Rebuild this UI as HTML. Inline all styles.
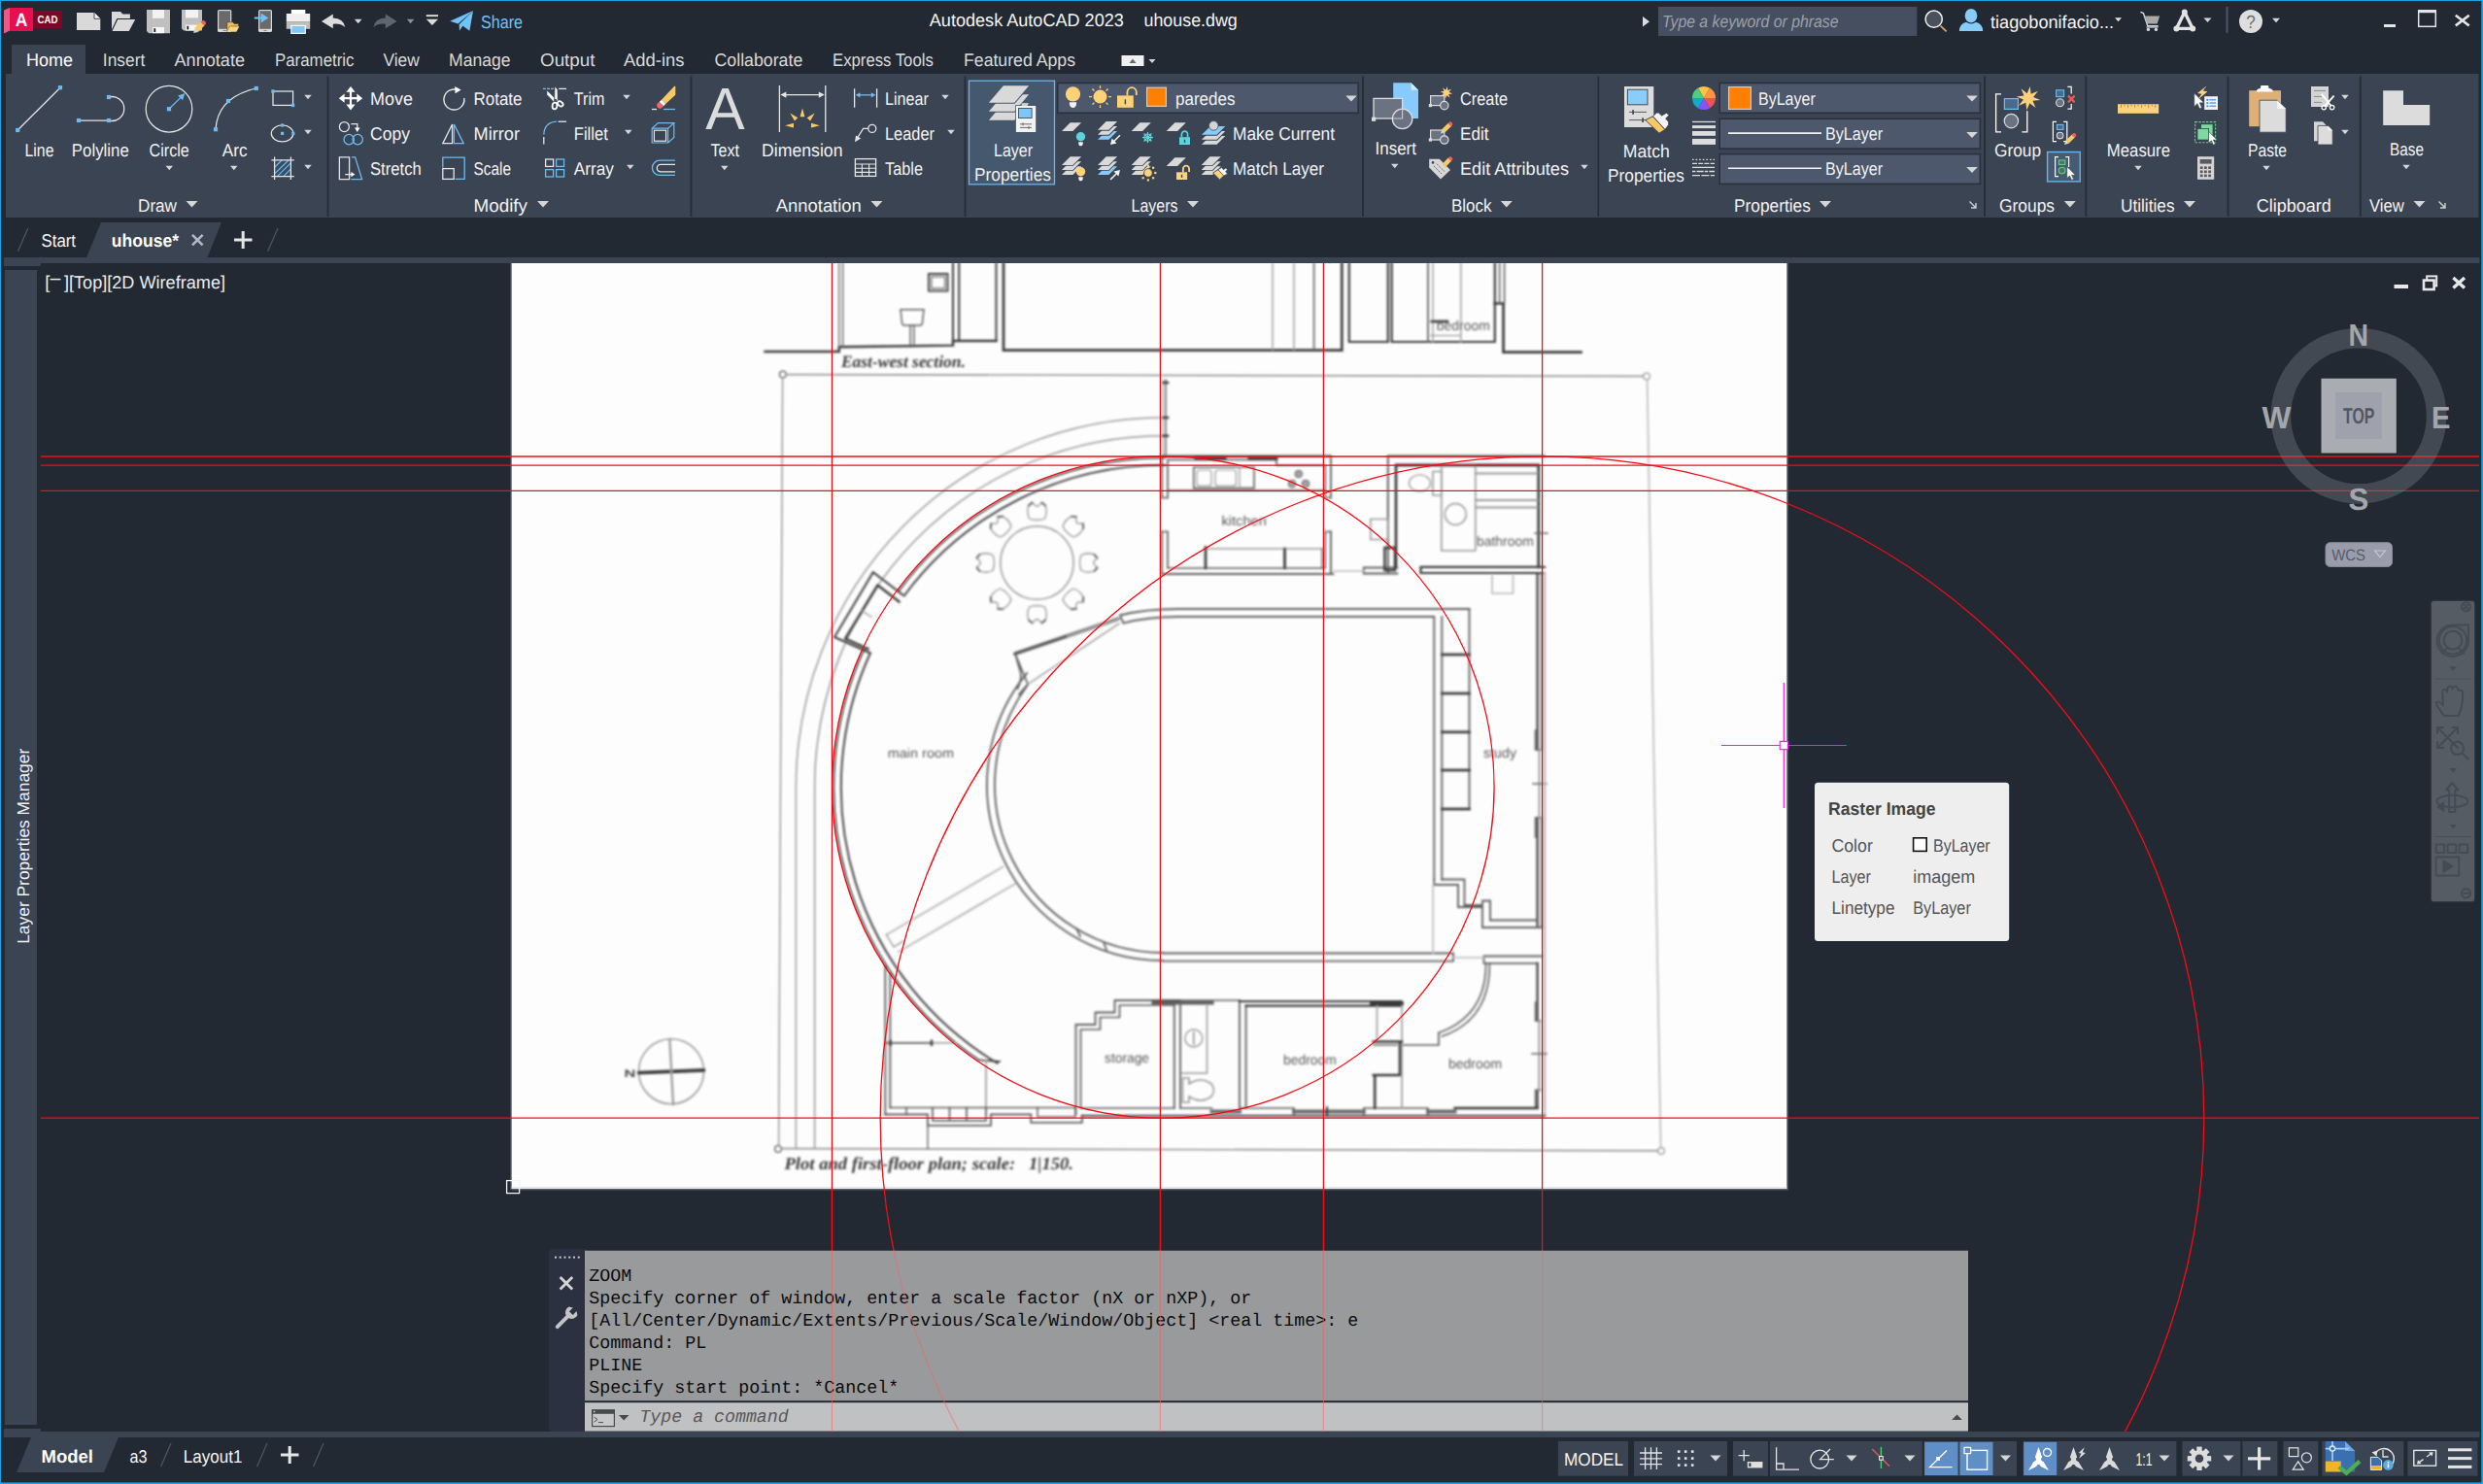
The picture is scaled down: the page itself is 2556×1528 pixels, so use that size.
<!DOCTYPE html>
<html lang="en"><head><meta charset="utf-8"><title>Autodesk AutoCAD 2023 - uhouse.dwg</title>
<style>html,body{margin:0;padding:0;background:#222933;overflow:hidden}svg{display:block}</style></head>
<body>
<svg width="2556" height="1528" viewBox="0 0 2556 1528" font-family="Liberation Sans, sans-serif" text-rendering="geometricPrecision">
<rect x="0" y="0" width="2556" height="1528" fill="#222933"/>
<defs><clipPath id="vp"><rect x="42" y="271" width="2510" height="1203"/></clipPath><clipPath id="img"><rect x="526.5" y="271" width="1313" height="953"/></clipPath><clipPath id="cmdc"><rect x="602" y="1287.7" width="1424" height="186"/></clipPath><filter id="soft" x="-2%" y="-2%" width="104%" height="104%"><feGaussianBlur stdDeviation="0.85"/></filter></defs>
<g clip-path="url(#vp)">
<rect x="526.5" y="271" width="1313" height="953" fill="#fdfdfd"/>
<rect x="526.5" y="1222.2" width="1313" height="1.4" fill="#e0e2e4"/>
<rect x="526.5" y="1224" width="1313.6" height="1.5" fill="#6c727b" opacity="0.75"/>
<rect x="1839.5" y="271" width="1.4" height="954.4" fill="#6c727b" opacity="0.6"/>
<rect x="525.2" y="271" width="1.3" height="954" fill="#6c727b" opacity="0.6"/>
<g clip-path="url(#img)">
<g filter="url(#soft)" stroke-linecap="square">
<path d="M787.5 362 H863.8 V357.2 L981 355.6 V351 H1025.5" fill="none" stroke="#3a3a3a" stroke-width="2.44"/>
<path d="M863.8 271 V357 M867.6 271 V357" fill="none" stroke="#5e5e5e" stroke-width="1.342"/>
<path d="M981 271 V352 M987.2 271 V351" fill="none" stroke="#3a3a3a" stroke-width="1.952"/>
<path d="M1025.5 271 V351" fill="none" stroke="#3a3a3a" stroke-width="1.952"/>
<path d="M1033 271 V360.6 H1381.3 V271" fill="none" stroke="#3a3a3a" stroke-width="2.684"/>
<path d="M1310 271 V360 M1332 271 V360" fill="none" stroke="#989898" stroke-width="1.342"/>
<path d="M1352.6 271 V360" fill="none" stroke="#5e5e5e" stroke-width="1.586"/>
<path d="M956 282 H975.5 V299.6 H956 Z" fill="none" stroke="#3a3a3a" stroke-width="1.83"/>
<path d="M958.8 284.8 H972.7 V296.8 H958.8 Z" fill="none" stroke="#5e5e5e" stroke-width="1.22"/>
<path d="M927 318.8 H951 L949.4 333 Q949 335 947 335 H931 Q929 335 928.6 333 Z" fill="none" stroke="#5e5e5e" stroke-width="1.464"/>
<path d="M937.2 335 V357 M940.8 335 V357" fill="none" stroke="#5e5e5e" stroke-width="1.464"/>
<path d="M1388.8 271 V352 H1428.8 V271" fill="none" stroke="#3a3a3a" stroke-width="2.196"/>
<path d="M1432.6 271 V352 H1538.8 V271" fill="none" stroke="#3a3a3a" stroke-width="2.196"/>
<path d="M1470 271 V352" fill="none" stroke="#5e5e5e" stroke-width="1.708"/>
<path d="M1475 271 V352 M1503.8 271 V352" fill="none" stroke="#989898" stroke-width="1.342"/>
<path d="M1473.8 331 H1490" fill="none" stroke="#3a3a3a" stroke-width="2.684"/>
<path d="M1473 345.5 H1503" fill="none" stroke="#989898" stroke-width="1.22"/>
<path d="M1538.8 312.5 H1547.6 V362.6 H1627.5" fill="none" stroke="#3a3a3a" stroke-width="2.684"/>
<path d="M1543.6 271 V312 M1548.6 271 V312" fill="none" stroke="#5e5e5e" stroke-width="1.586"/>
<text x="1478.8" y="340" font-size="14" fill="#585858" textLength="55" lengthAdjust="spacingAndGlyphs">bedroom</text>
<text x="866" y="377.5" font-size="17.5" fill="#3a3a3a" textLength="127.8" lengthAdjust="spacingAndGlyphs" font-weight="bold" font-style="italic" font-family="Liberation Serif, DejaVu Serif, serif">East-west section.</text>
<circle cx="805.8" cy="385.5" r="3.4" fill="none" stroke="#5e5e5e" stroke-width="1.3"/>
<circle cx="1695" cy="387.5" r="3.4" fill="none" stroke="#989898" stroke-width="1.2"/>
<circle cx="801" cy="1183" r="3.4" fill="none" stroke="#5e5e5e" stroke-width="1.3"/>
<circle cx="1710" cy="1185" r="3.4" fill="none" stroke="#989898" stroke-width="1.2"/>
<path d="M809.2 385.6 L1691.6 387.4" fill="none" stroke="#989898" stroke-width="1.708"/>
<path d="M805.6 389 L801.6 1179.6" fill="none" stroke="#989898" stroke-width="1.464"/>
<path d="M804.4 1182.6 L1706.6 1184.8" fill="none" stroke="#989898" stroke-width="1.708"/>
<path d="M1695.6 391 L1709.6 1181.6" fill="none" stroke="#b8b8b8" stroke-width="1.586"/>
<path d="M1196 430 A378 380.5 0 0 0 819.4 810.5 V1182.5" fill="none" stroke="#989898" stroke-width="1.464"/>
<path d="M1196 448.8 A358.8 361.8 0 0 0 838.6 810.5 V1182.5" fill="none" stroke="#989898" stroke-width="1.464"/>
<path d="M1200 391 V469" fill="none" stroke="#5e5e5e" stroke-width="1.464"/>
<path d="M1197 391 V469" fill="none" stroke="#989898" stroke-width="1.22"/>
<path d="M1197.5 394 H1202" fill="none" stroke="#3a3a3a" stroke-width="2.44"/>
<path d="M1197.5 430 H1202" fill="none" stroke="#3a3a3a" stroke-width="2.44"/>
<path d="M1197.5 448.8 H1202" fill="none" stroke="#3a3a3a" stroke-width="2.44"/>
<path d="M955 1159 V1182.5" fill="none" stroke="#5e5e5e" stroke-width="1.342"/>
<path d="M1199.2 471.3 A339.2 339.2 0 0 0 924.6 609.0" fill="none" stroke="#3a3a3a" stroke-width="1.83"/>
<path d="M1199.1 478.9 A331.6 331.6 0 0 0 930.7 613.5" fill="none" stroke="#3a3a3a" stroke-width="1.83"/>
<path d="M924.6 609.0 L930 613 L898.8 589.2 L859 656 L896 672.5 L889.0 669.3" fill="none" stroke="#3a3a3a" stroke-width="1.952"/>
<path d="M925.5 619.5 L903.5 602.5 L870.2 657.5 L893.5 668.2" fill="none" stroke="#3a3a3a" stroke-width="2.44"/>
<path d="M887.5 629 L897.5 635.5" fill="none" stroke="#989898" stroke-width="1.22"/>
<path d="M889.0 669.3 A339.2 339.2 0 0 0 1007.4 1091.5" fill="none" stroke="#3a3a3a" stroke-width="1.83"/>
<path d="M895.9 672.5 A331.6 331.6 0 0 0 1026.3 1094.5" fill="none" stroke="#3a3a3a" stroke-width="1.83"/>
<path d="M1007.4 1091.5 L1028.5 1093 L1026.28 1094.53" fill="none" stroke="#3a3a3a" stroke-width="1.708"/>
<path d="M1512.5 627 H1212 Q1180 627 1153 633.5 L1156.4 641.6 Q1182 635 1212 635 H1476" fill="none" stroke="#5e5e5e" stroke-width="1.83"/>
<path d="M1476.3 635 V905.5 M1484.3 635 V905.5" fill="none" stroke="#5e5e5e" stroke-width="1.83"/>
<path d="M1197 981.5 H1496 V989.6 H1197" fill="none" stroke="#5e5e5e" stroke-width="1.83"/>
<path d="M1197.0 989.0 A181 181 0 0 1 1057.1 693.1" fill="none" stroke="#5e5e5e" stroke-width="1.83"/>
<path d="M1197.0 981.0 A173 173 0 0 1 1057.8 705.3" fill="none" stroke="#5e5e5e" stroke-width="1.83"/>
<path d="M1045 673 L1150 637.5" fill="none" stroke="#3a3a3a" stroke-width="3.904" stroke-opacity="0.8" stroke-linecap="round"/>
<path d="M1100 655 L1152 637" fill="none" stroke="#989898" stroke-width="2.684"/>
<path d="M1045 673 L1050.5 692 Q1052 700 1047.5 709 M1045 673 L1058 704.5 L1049 715" fill="none" stroke="#5e5e5e" stroke-width="1.708"/>
<path d="M1058 704.5 L1152 642" fill="none" stroke="#989898" stroke-width="1.464"/>
<path d="M1032.5 892.5 L912.5 962.5 M1045 910 L925 980" fill="none" stroke="#b8b8b8" stroke-width="1.952"/>
<path d="M912.5 962.5 L920 975 L930 969" fill="none" stroke="#989898" stroke-width="1.342"/>
<path d="M1108 956 L1112 964 M1136 970 L1139 978" fill="none" stroke="#5e5e5e" stroke-width="1.708"/>
<circle cx="1067.5" cy="579.5" r="37.7" fill="none" stroke="#989898" stroke-width="1.5"/>
<g transform="translate(1067.5 528.0) rotate(-90)" fill="none" stroke="#989898" stroke-width="1.3"><path d="M-6 -8 Q-9 0 -6 8 Q2 11.5 8.5 8 Q11 4 8 2.5 Q5.5 0 8 -2.5 Q11 -4 8.5 -8 Q2 -11.5 -6 -8 Z"/><path d="M7.5 -8.5 L10.5 -5 M7.5 8.5 L10.5 5" stroke="#5e5e5e" stroke-width="1.8"/></g>
<g transform="translate(1103.9 543.1) rotate(-45)" fill="none" stroke="#989898" stroke-width="1.3"><path d="M-6 -8 Q-9 0 -6 8 Q2 11.5 8.5 8 Q11 4 8 2.5 Q5.5 0 8 -2.5 Q11 -4 8.5 -8 Q2 -11.5 -6 -8 Z"/><path d="M7.5 -8.5 L10.5 -5 M7.5 8.5 L10.5 5" stroke="#5e5e5e" stroke-width="1.8"/></g>
<g transform="translate(1119.0 579.5) rotate(0)" fill="none" stroke="#989898" stroke-width="1.3"><path d="M-6 -8 Q-9 0 -6 8 Q2 11.5 8.5 8 Q11 4 8 2.5 Q5.5 0 8 -2.5 Q11 -4 8.5 -8 Q2 -11.5 -6 -8 Z"/><path d="M7.5 -8.5 L10.5 -5 M7.5 8.5 L10.5 5" stroke="#5e5e5e" stroke-width="1.8"/></g>
<g transform="translate(1103.9 615.9) rotate(45)" fill="none" stroke="#989898" stroke-width="1.3"><path d="M-6 -8 Q-9 0 -6 8 Q2 11.5 8.5 8 Q11 4 8 2.5 Q5.5 0 8 -2.5 Q11 -4 8.5 -8 Q2 -11.5 -6 -8 Z"/><path d="M7.5 -8.5 L10.5 -5 M7.5 8.5 L10.5 5" stroke="#5e5e5e" stroke-width="1.8"/></g>
<g transform="translate(1067.5 631.0) rotate(90)" fill="none" stroke="#989898" stroke-width="1.3"><path d="M-6 -8 Q-9 0 -6 8 Q2 11.5 8.5 8 Q11 4 8 2.5 Q5.5 0 8 -2.5 Q11 -4 8.5 -8 Q2 -11.5 -6 -8 Z"/><path d="M7.5 -8.5 L10.5 -5 M7.5 8.5 L10.5 5" stroke="#5e5e5e" stroke-width="1.8"/></g>
<g transform="translate(1031.1 615.9) rotate(135)" fill="none" stroke="#989898" stroke-width="1.3"><path d="M-6 -8 Q-9 0 -6 8 Q2 11.5 8.5 8 Q11 4 8 2.5 Q5.5 0 8 -2.5 Q11 -4 8.5 -8 Q2 -11.5 -6 -8 Z"/><path d="M7.5 -8.5 L10.5 -5 M7.5 8.5 L10.5 5" stroke="#5e5e5e" stroke-width="1.8"/></g>
<g transform="translate(1016.0 579.5) rotate(180)" fill="none" stroke="#989898" stroke-width="1.3"><path d="M-6 -8 Q-9 0 -6 8 Q2 11.5 8.5 8 Q11 4 8 2.5 Q5.5 0 8 -2.5 Q11 -4 8.5 -8 Q2 -11.5 -6 -8 Z"/><path d="M7.5 -8.5 L10.5 -5 M7.5 8.5 L10.5 5" stroke="#5e5e5e" stroke-width="1.8"/></g>
<g transform="translate(1031.1 543.1) rotate(225)" fill="none" stroke="#989898" stroke-width="1.3"><path d="M-6 -8 Q-9 0 -6 8 Q2 11.5 8.5 8 Q11 4 8 2.5 Q5.5 0 8 -2.5 Q11 -4 8.5 -8 Q2 -11.5 -6 -8 Z"/><path d="M7.5 -8.5 L10.5 -5 M7.5 8.5 L10.5 5" stroke="#5e5e5e" stroke-width="1.8"/></g>
<path d="M1196 512.5 V469.5 H1370 V512.5 M1196 547.5 V591 H1372.5 M1370 547.5 V591" fill="none" stroke="#5e5e5e" stroke-width="1.83"/>
<path d="M1202 512.5 V473.4 H1314 V479 H1364.2 V512.5 M1202 547.5 V585 H1364.2 V547.5" fill="none" stroke="#5e5e5e" stroke-width="1.708"/>
<path d="M1196 512.5 H1202 M1196 547.5 H1202 M1364.2 512.5 H1370 M1364.2 547.5 H1370" fill="none" stroke="#5e5e5e" stroke-width="1.586"/>
<path d="M1231 471.8 H1261 M1286 471.8 H1314" fill="none" stroke="#3a3a3a" stroke-width="3.172"/>
<path d="M1202 505 H1364" fill="none" stroke="#5e5e5e" stroke-width="1.464"/>
<path d="M1228.8 481 H1291 V502.6 H1228.8 Z" fill="none" stroke="#5e5e5e" stroke-width="1.586"/>
<rect x="1232" y="484" width="15" height="16.4" fill="none" rx="3" stroke="#989898" stroke-width="1.2"/>
<rect x="1251" y="484" width="21.5" height="16.4" fill="none" rx="3" stroke="#989898" stroke-width="1.2"/>
<path d="M1276 481 V502" fill="none" stroke="#989898" stroke-width="1.22"/>
<circle cx="1336.8" cy="488" r="3.4" fill="none" stroke="#5e5e5e" stroke-width="1.4"/>
<path d="M1334.3 488 h5 M1336.8 485.5 v5" fill="none" stroke="#5e5e5e" stroke-width="1.098"/>
<circle cx="1330" cy="498.2" r="3.4" fill="none" stroke="#5e5e5e" stroke-width="1.4"/>
<path d="M1327.5 498.2 h5 M1330 495.7 v5" fill="none" stroke="#5e5e5e" stroke-width="1.098"/>
<circle cx="1344" cy="498.2" r="3.4" fill="none" stroke="#5e5e5e" stroke-width="1.4"/>
<path d="M1341.5 498.2 h5 M1344 495.7 v5" fill="none" stroke="#5e5e5e" stroke-width="1.098"/>
<path d="M1241 565 H1361" fill="none" stroke="#989898" stroke-width="1.464"/>
<path d="M1241 563.5 V585 M1322.5 565 V585" fill="none" stroke="#3a3a3a" stroke-width="2.684"/>
<path d="M1361 565 V585" fill="none" stroke="#5e5e5e" stroke-width="1.464"/>
<text x="1257.5" y="541" font-size="14" fill="#585858" textLength="46.3" lengthAdjust="spacingAndGlyphs">kitchen</text>
<path d="M1428.8 590 V469.5 H1590" fill="none" stroke="#5e5e5e" stroke-width="1.952"/>
<path d="M1437 583.8 V478.8 H1583.8 V583.8" fill="none" stroke="#3a3a3a" stroke-width="2.684"/>
<path d="M1462.5 583.8 H1590 M1462.5 590 H1590 M1462.5 583.8 V590" fill="none" stroke="#3a3a3a" stroke-width="2.196"/>
<path d="M1403.8 584.5 H1438.5 M1403.8 590.5 H1438.5 M1403.8 584.5 V590.5" fill="none" stroke="#5e5e5e" stroke-width="1.83"/>
<path d="M1425.4 564 H1436 V587 H1425.4 Z" fill="none" stroke="#3a3a3a" stroke-width="2.44"/>
<path d="M1372.5 588 H1404" fill="none" stroke="#b8b8b8" stroke-width="1.464"/>
<ellipse cx="1461.5" cy="497.5" rx="11" ry="8.6" fill="none" stroke="#989898" stroke-width="1.3"/>
<path d="M1475 485.5 H1483.8 V510 H1475 Z" fill="none" stroke="#989898" stroke-width="1.586"/>
<path d="M1483.8 480 H1518.8 V567 H1483.8 Z" fill="none" stroke="#989898" stroke-width="1.586"/>
<circle cx="1498.3" cy="529.5" r="11" fill="none" stroke="#989898" stroke-width="1.4"/>
<path d="M1518.8 487.5 H1582.5 M1518.8 515 H1582.5 M1518.8 522.5 H1582.5" fill="none" stroke="#989898" stroke-width="1.83"/>
<path d="M1410.8 534.5 H1428.8 V555.5 H1410.8 Z" fill="none" stroke="#989898" stroke-width="1.586"/>
<path d="M1536 592.5 V611 H1557.5 V592.5" fill="none" stroke="#b8b8b8" stroke-width="1.586"/>
<path d="M1580 549 H1593" fill="none" stroke="#5e5e5e" stroke-width="1.464"/>
<text x="1520" y="562" font-size="14" fill="#585858" textLength="58.8" lengthAdjust="spacingAndGlyphs">bathroom</text>
<path d="M1582.6 590 V772 M1582.6 842 V955" fill="none" stroke="#3a3a3a" stroke-width="2.196"/>
<path d="M1586.6 590 V772 M1586.6 842 V955" fill="none" stroke="#5e5e5e" stroke-width="1.464"/>
<path d="M1580.6 752 V772 H1586 M1580.6 862 V842 H1586" fill="none" stroke="#5e5e5e" stroke-width="1.708"/>
<path d="M1584.6 772 V842" fill="none" stroke="#989898" stroke-width="1.952"/>
<path d="M1578 807 H1592" fill="none" stroke="#5e5e5e" stroke-width="1.464"/>
<path d="M1512.5 627 V833" fill="none" stroke="#5e5e5e" stroke-width="1.83"/>
<path d="M1484.3 674 H1512.5" fill="none" stroke="#3a3a3a" stroke-width="2.684"/>
<path d="M1484.3 714 H1512.5" fill="none" stroke="#3a3a3a" stroke-width="2.684"/>
<path d="M1484.3 753.8 H1512.5" fill="none" stroke="#3a3a3a" stroke-width="2.684"/>
<path d="M1484.3 793 H1512.5" fill="none" stroke="#3a3a3a" stroke-width="2.684"/>
<path d="M1484.3 833 H1512.5" fill="none" stroke="#3a3a3a" stroke-width="2.684"/>
<path d="M1476.3 905.5 V911 H1501 V934 H1526 V955 H1587" fill="none" stroke="#5e5e5e" stroke-width="1.83"/>
<path d="M1484.3 905.5 H1507.5 V932 H1526 V927.5 H1534 V947.5 H1582.6" fill="none" stroke="#5e5e5e" stroke-width="1.83"/>
<path d="M1475.2 911 V982" fill="none" stroke="#b8b8b8" stroke-width="1.586"/>
<text x="1527" y="780" font-size="14" fill="#585858" textLength="34" lengthAdjust="spacingAndGlyphs">study</text>
<path d="M1527.5 984.5 H1587 M1527.5 991.8 H1582.6 M1527.5 984.5 V991.8" fill="none" stroke="#5e5e5e" stroke-width="1.83"/>
<path d="M1582.6 991.8 V1051 M1582.6 1122.5 V1141" fill="none" stroke="#3a3a3a" stroke-width="2.196"/>
<path d="M1590 590 V1149" fill="none" stroke="#b8b8b8" stroke-width="2.44"/>
<path d="M1580.6 1032 V1051 H1586 M1580.6 1141 V1122.5 H1586" fill="none" stroke="#5e5e5e" stroke-width="1.586"/>
<path d="M1584.4 1051 V1122" fill="none" stroke="#989898" stroke-width="1.952"/>
<path d="M1577 1085 H1592" fill="none" stroke="#5e5e5e" stroke-width="1.464"/>
<path d="M1529.6 992 Q1530 1046 1481 1063.5 M1533.4 992 Q1534 1050 1484.4 1067" fill="none" stroke="#5e5e5e" stroke-width="1.586"/>
<path d="M1481 1063.5 V1076 H1444" fill="none" stroke="#5e5e5e" stroke-width="1.708"/>
<path d="M1496 986 H1527.5" fill="none" stroke="#b8b8b8" stroke-width="1.464"/>
<text x="1491" y="1099.5" font-size="14" fill="#585858" textLength="55" lengthAdjust="spacingAndGlyphs">bedroom</text>
<path d="M911.3 995 V1147.5 M916.3 1000 V1140.5" fill="none" stroke="#5e5e5e" stroke-width="1.83"/>
<path d="M911.3 1073.8 H960" fill="none" stroke="#5e5e5e" stroke-width="1.83"/>
<path d="M960 1073.8 H985" fill="none" stroke="#989898" stroke-width="1.464"/>
<path d="M959 1071.8 V1075.8" fill="none" stroke="#3a3a3a" stroke-width="2.44"/>
<path d="M916.6 1071.8 V1075.8" fill="none" stroke="#3a3a3a" stroke-width="2.44"/>
<path d="M1015 1092 V1140" fill="none" stroke="#989898" stroke-width="1.586"/>
<path d="M916.3 1140.5 H1107.5" fill="none" stroke="#5e5e5e" stroke-width="1.708"/>
<path d="M911.3 1147.5 H955 V1158.8 H1020 V1147.5 H1061.3 V1155.8 H1113.8 V1148.4" fill="none" stroke="#5e5e5e" stroke-width="1.83"/>
<path d="M1113.8 1149 H1590" fill="none" stroke="#5e5e5e" stroke-width="2.44"/>
<path d="M960 1140.5 V1153.8 H1015 V1140.5 M977.5 1140.5 V1153.8 M995 1140.5 V1153.8" fill="none" stroke="#5e5e5e" stroke-width="1.708"/>
<path d="M933 1140.5 V1147.5 M1068 1140.5 V1150 H1107 V1140.5" fill="none" stroke="#5e5e5e" stroke-width="1.464"/>
<path d="M1112.5 1141 H1208.8 M1215 1141 H1247.5" fill="none" stroke="#5e5e5e" stroke-width="1.708"/>
<path d="M1247.5 1144.5 H1276 M1332 1144.5 H1403.8 M1470 1144.5 H1497.5" fill="none" stroke="#3a3a3a" stroke-width="3.904" stroke-opacity="0.75"/>
<path d="M1276 1141 H1332 V1148.4 M1403.8 1148.4 V1141 H1470 V1148.4" fill="none" stroke="#5e5e5e" stroke-width="1.708"/>
<path d="M1497.5 1141 H1582.6" fill="none" stroke="#3a3a3a" stroke-width="2.318"/>
<path d="M1366 1140 V1149" fill="none" stroke="#3a3a3a" stroke-width="1.952"/>
<path d="M1107.5 1147.5 V1055 H1127.5 V1042.5 H1147.5 V1030 H1215" fill="none" stroke="#5e5e5e" stroke-width="1.83"/>
<path d="M1112.5 1141 V1060 H1132.5 V1047.5 H1152.5 V1035 H1208.8" fill="none" stroke="#5e5e5e" stroke-width="1.708"/>
<path d="M1187.5 1032.4 H1247.5" fill="none" stroke="#3a3a3a" stroke-width="4.148" stroke-opacity="0.8"/>
<path d="M1208.8 1035 V1141 M1215 1035 V1141" fill="none" stroke="#5e5e5e" stroke-width="1.83"/>
<path d="M1215 1030 H1276" fill="none" stroke="#5e5e5e" stroke-width="1.586"/>
<text x="1137" y="1094" font-size="14" fill="#585858" textLength="46" lengthAdjust="spacingAndGlyphs">storage</text>
<path d="M1242.5 1035 V1105 H1217" fill="none" stroke="#989898" stroke-width="1.586"/>
<circle cx="1228.8" cy="1069" r="9" fill="none" stroke="#989898" stroke-width="1.4"/>
<path d="M1228.8 1063 V1075" fill="none" stroke="#989898" stroke-width="1.708"/>
<path d="M1217.5 1110 H1224 V1116 Q1236 1108 1247 1116 Q1252 1122.5 1247 1129 Q1236 1137 1224 1129 V1135 H1217.5 Z" fill="none" stroke="#989898" stroke-width="1.586"/>
<path d="M1276 1030 V1141 M1282.6 1035.5 V1141" fill="none" stroke="#5e5e5e" stroke-width="1.83"/>
<path d="M1276 1031 H1442.5 M1282.6 1035.6 H1442.5" fill="none" stroke="#3a3a3a" stroke-width="2.196"/>
<path d="M1412 1033.2 H1443" fill="none" stroke="#3a3a3a" stroke-width="3.904"/>
<path d="M1417.5 1035.6 V1072 M1443.2 1035.6 V1141" fill="none" stroke="#989898" stroke-width="1.586"/>
<path d="M1413.8 1072.5 H1443 M1441 1072.5 V1107 H1413.8 M1415.2 1107 V1141" fill="none" stroke="#3a3a3a" stroke-width="2.562"/>
<path d="M1413.8 1076 H1438" fill="none" stroke="#5e5e5e" stroke-width="1.464"/>
<text x="1321" y="1096" font-size="14" fill="#585858" textLength="54.8" lengthAdjust="spacingAndGlyphs">bedroom</text>
<text x="913.8" y="779.5" font-size="13.5" fill="#585858" textLength="68.2" lengthAdjust="spacingAndGlyphs">main room</text>
<circle cx="691" cy="1103.2" r="33.5" fill="none" stroke="#989898" stroke-width="1.6"/>
<path d="M658 1104.5 L724.2 1102" fill="none" stroke="#3a3a3a" stroke-width="3.66"/>
<path d="M689.4 1070 L693 1137" fill="none" stroke="#989898" stroke-width="2.196"/>
<text x="642.6" y="1108.7" font-size="10.8" fill="#4a4a4a" textLength="11.9" lengthAdjust="spacingAndGlyphs" font-weight="bold">N</text>
<text x="807.5" y="1203.8" font-size="18" fill="#3a3a3a" textLength="297.5" lengthAdjust="spacingAndGlyphs" font-weight="bold" font-style="italic" font-family="Liberation Serif, DejaVu Serif, serif" xml:space="preserve">Plot and first-floor plan; scale:   1|150.</text>
</g>
</g>
<g fill="none" stroke="#fa0a14" stroke-width="1.3">
<line x1="856.45" y1="271" x2="856.45" y2="1474"/>
<line x1="1194.4" y1="271" x2="1194.4" y2="1474"/>
<line x1="1362.4" y1="271" x2="1362.4" y2="1474"/>
<line x1="1587.6" y1="271" x2="1587.6" y2="1474"/>
<line x1="42" y1="470" x2="2552" y2="470"/>
<line x1="42" y1="479.05" x2="2552" y2="479.05"/>
<line x1="42" y1="505.35" x2="2552" y2="505.35"/>
<line x1="42" y1="1151.2" x2="2552" y2="1151.2"/>
<circle cx="1197.4" cy="810.5" r="340.7"/>
<circle cx="1587.5" cy="1151.2" r="681.3"/>
</g>
<circle cx="2428" cy="428.3" r="80.1" fill="none" stroke="#8a9098" stroke-width="20.6" stroke-opacity="0.32"/>
<rect x="2389.5" y="389.7" width="77.3" height="76.8" fill="#a9adb1"/>
<rect x="2404" y="403.9" width="47.8" height="48.1" fill="#9fa2ac"/>
<text x="2412" y="435.8" font-size="23" fill="#4f5763" textLength="32.3" lengthAdjust="spacingAndGlyphs" font-weight="bold">TOP</text>
<text x="2417.4" y="356" font-size="32" fill="#a3a6ab" textLength="20.6" lengthAdjust="spacingAndGlyphs" font-weight="bold">N</text>
<text x="2417.6" y="525.3" font-size="32" fill="#a3a6ab" textLength="20.8" lengthAdjust="spacingAndGlyphs" font-weight="bold">S</text>
<text x="2328.4" y="440.6" font-size="32" fill="#a3a6ab" textLength="29.9" lengthAdjust="spacingAndGlyphs" font-weight="bold">W</text>
<text x="2503" y="440.6" font-size="32" fill="#a3a6ab" textLength="19.4" lengthAdjust="spacingAndGlyphs" font-weight="bold">E</text>
<rect x="2394" y="558.7" width="68.5" height="24.7" fill="#9a9cab" rx="4.5" stroke="#8a8c9c" stroke-width="1"/>
<text x="2400.2" y="576.6" font-size="16.5" fill="#555c68" textLength="34.8" lengthAdjust="spacingAndGlyphs">WCS</text>
<path d="M2444.6 567 L2455.4 567 L2450 573.6 Z" fill="none" stroke="#c4c6d0" stroke-width="1.2"/>
<rect x="2502.3" y="618.4" width="45.4" height="310.3" fill="#565c64" rx="3.5" stroke="#30363f" stroke-width="1.2"/>
<g fill="none" stroke="#454b55" stroke-width="2" stroke-linecap="round" stroke-linejoin="round">
<circle cx="2538.6" cy="624.8" r="4.6" fill="none"/>
<path d="M2536.2 622.4 L2541 627.2 M2541 622.4 L2536.2 627.2" fill="none"/>
<circle cx="2538.6" cy="919.8" r="4.6" fill="none"/>
<path d="M2536 919.8 H2541.2" fill="none"/>
<path d="M2525 643.5 H2541 V659.5 A16.2 16.2 0 1 1 2525 643.5 Z" fill="none"/>
<circle cx="2525" cy="659.2" r="9.4" fill="none"/>
<circle cx="2525" cy="659.2" r="14.2" fill="none"/>
<path d="M2518.5 668 L2514 672.5 M2531.5 668 L2536 672.5"/>
<path d="M2516 737 C2512 732 2509 727 2507.6 723.6 C2509.5 721.6 2512.4 722.6 2515 726.4 L2514.2 711.5 C2516 709 2518.6 710 2518.8 712.8 L2519.6 708 C2521.6 705.6 2524.2 706.6 2524.4 709.4 L2525.4 707.4 C2527.6 705.6 2530 706.8 2530 709.8 L2531.2 711.2 C2533.4 709.8 2535.4 711.2 2535.2 714 C2535.2 722 2534 730 2530.8 737 Z" fill="none"/>
<path d="M2509 749 L2530 770 M2530 749 L2509 770 M2509 755 V749 H2515 M2524 749 H2530 V755 M2509 764 V770 H2515" fill="none"/>
<circle cx="2529.6" cy="770.4" r="6.6" fill="none"/>
<path d="M2534.4 775.2 L2541 781.8" fill="none"/>
<path d="M2524.2 806 L2530.4 813.5 H2527.2 V836 H2521.2 V813.5 H2518 Z" fill="none"/>
<ellipse cx="2524.4" cy="825" rx="16" ry="6.2"/>
<path d="M2515 826.5 L2509.8 830.8 L2515.4 834.6 Z" fill="#454b55"/>
<rect x="2507.6" y="869.4" width="8.6" height="8.6" fill="none"/>
<rect x="2519.6" y="869.4" width="8.6" height="8.6" fill="none"/>
<rect x="2531.6" y="869.4" width="8.6" height="8.6" fill="none"/>
<rect x="2507.6" y="882.6" width="23.6" height="18.8" fill="none"/>
<path d="M2515.4 886.6 L2524.6 892 L2515.4 897.4 Z" fill="#454b55"/>
</g>
<path d="M2521.4 686.3 L2529 686.3 L2525.2 690.9 Z" fill="#454b55"/>
<path d="M2521.4 791.1 L2529 791.1 L2525.2 795.7 Z" fill="#454b55"/>
<path d="M2521.4 848.9 L2529 848.9 L2525.2 853.5 Z" fill="#454b55"/>
<line x1="2506" y1="699" x2="2545" y2="699" stroke="#4a5059" stroke-width="1"/>
<line x1="2506" y1="861.5" x2="2545" y2="861.5" stroke="#4a5059" stroke-width="1"/>
<text x="46.2" y="296.6" font-size="18.5" fill="#ececec">[</text>
<line x1="51.6" y1="287.6" x2="62.4" y2="287.6" stroke="#ececec" stroke-width="1.5"/>
<text x="66" y="296.6" font-size="18.5" fill="#ececec" textLength="166" lengthAdjust="spacingAndGlyphs">][Top][2D Wireframe]</text>
<rect x="2464.5" y="293" width="14.5" height="4" fill="#e8e8e8"/>
<rect x="2498.2" y="284.4" width="10" height="10" fill="none" stroke="#e8e8e8" stroke-width="2"/>
<rect x="2495" y="288.6" width="10.6" height="9.4" fill="#222933" stroke="#e8e8e8" stroke-width="2.6"/>
<path d="M2525.4 286 L2537 296.4 M2537 286 L2525.4 296.4" fill="none" stroke="#e8e8e8" stroke-width="3.4"/>
<line x1="1772" y1="767.5" x2="1900.8" y2="767.5" stroke="#ff10ff" stroke-width="1.2"/>
<line x1="1836.3" y1="703" x2="1836.3" y2="832" stroke="#ff10ff" stroke-width="1.2"/>
<rect x="1832.2" y="763.4" width="8.3" height="8.3" fill="#ffffff" stroke="#ff10ff" stroke-width="1.1"/>
<rect x="521.6" y="1215.6" width="13" height="13" fill="none" stroke="#f4f4f4" stroke-width="1.3"/>
<rect x="1868" y="805.8" width="200.2" height="163.2" fill="#eeeeee" rx="3.5"/>
<text x="1882" y="838.9" font-size="18.5" fill="#444444" textLength="110.6" lengthAdjust="spacingAndGlyphs" font-weight="bold">Raster Image</text>
<text x="1885.5" y="876.8" font-size="18.5" fill="#555555" textLength="42.3" lengthAdjust="spacingAndGlyphs">Color</text>
<rect x="1969.6" y="862.8" width="13.6" height="13.6" fill="#ffffff" stroke="#101010" stroke-width="1.6"/>
<text x="1990" y="876.8" font-size="18.5" fill="#555555" textLength="58.7" lengthAdjust="spacingAndGlyphs">ByLayer</text>
<text x="1885.5" y="909" font-size="18.5" fill="#555555" textLength="40.3" lengthAdjust="spacingAndGlyphs">Layer</text>
<text x="1969.3" y="909" font-size="18.5" fill="#555555" textLength="64.1" lengthAdjust="spacingAndGlyphs">imagem</text>
<text x="1885.5" y="941.2" font-size="18.5" fill="#555555" textLength="65" lengthAdjust="spacingAndGlyphs">Linetype</text>
<text x="1969.3" y="941.2" font-size="18.5" fill="#555555" textLength="59.5" lengthAdjust="spacingAndGlyphs">ByLayer</text>
</g>
<rect x="565.3" y="1286.3" width="40" height="187.7" fill="#2b3140" rx="3"/>
<rect x="571" y="1293.6" width="2" height="2" fill="#c8c8c8"/>
<rect x="575.75" y="1293.6" width="2" height="2" fill="#c8c8c8"/>
<rect x="580.5" y="1293.6" width="2" height="2" fill="#c8c8c8"/>
<rect x="585.25" y="1293.6" width="2" height="2" fill="#c8c8c8"/>
<rect x="590" y="1293.6" width="2" height="2" fill="#c8c8c8"/>
<rect x="594.75" y="1293.6" width="2" height="2" fill="#c8c8c8"/>
<path d="M576.6 1315 L589.2 1327.6 M589.2 1315 L576.6 1327.6" fill="none" stroke="#d4d4d4" stroke-width="2.8"/>
<g transform="translate(583.3 1356.6) rotate(45)" fill="#c4c4c4"><rect x="-2" y="-4" width="4" height="19.5" rx="2"/><path d="M-6.2 -9.5 A6.6 6.6 0 0 0 -2.2 -1.2 L2.2 -1.2 A6.6 6.6 0 0 0 6.2 -9.5 L2.6 -11.8 L2.6 -6.4 L-2.6 -6.4 L-2.6 -11.8 Z"/></g>
<rect x="602" y="1287.7" width="1424" height="154.8" fill="#999a9c"/>
<rect x="602" y="1442.4" width="1424" height="1.8" fill="#232a34"/>
<rect x="602" y="1444.2" width="1424" height="29.4" fill="#c0c1c3"/>
<text x="606.2" y="1318.6" font-size="18.4" fill="#0c0c0c" textLength="44" lengthAdjust="spacingAndGlyphs" font-family="Liberation Mono, DejaVu Sans Mono, monospace">ZOOM</text>
<text x="606.2" y="1341.7" font-size="18.4" fill="#0c0c0c" textLength="682" lengthAdjust="spacingAndGlyphs" font-family="Liberation Mono, DejaVu Sans Mono, monospace">Specify corner of window, enter a scale factor (nX or nXP), or</text>
<text x="606.2" y="1364.7" font-size="18.4" fill="#0c0c0c" textLength="792" lengthAdjust="spacingAndGlyphs" font-family="Liberation Mono, DejaVu Sans Mono, monospace">[All/Center/Dynamic/Extents/Previous/Scale/Window/Object] &lt;real time&gt;: e</text>
<text x="606.2" y="1387.7" font-size="18.4" fill="#0c0c0c" textLength="121" lengthAdjust="spacingAndGlyphs" font-family="Liberation Mono, DejaVu Sans Mono, monospace">Command: PL</text>
<text x="606.2" y="1410.7" font-size="18.4" fill="#0c0c0c" textLength="55" lengthAdjust="spacingAndGlyphs" font-family="Liberation Mono, DejaVu Sans Mono, monospace">PLINE</text>
<text x="606.2" y="1433.7" font-size="18.4" fill="#0c0c0c" textLength="319" lengthAdjust="spacingAndGlyphs" font-family="Liberation Mono, DejaVu Sans Mono, monospace">Specify start point: *Cancel*</text>
<text x="658.4" y="1464.3" font-size="18.4" fill="#585858" textLength="153.3" lengthAdjust="spacingAndGlyphs" font-style="italic" font-family="Liberation Mono, DejaVu Sans Mono, monospace">Type a command</text>
<rect x="609.6" y="1451.8" width="22.8" height="16.8" fill="#c8c8c8" stroke="#4a4a4a" stroke-width="1.2"/>
<rect x="609.6" y="1451.8" width="22.8" height="4" fill="#4a4a4a"/>
<rect x="611" y="1452.8" width="1.4" height="1.4" fill="#e0e0e0"/>
<path d="M611.6 1459 L615 1461.6 L611.6 1464.2 M616 1464.6 H621" fill="none" stroke="#4a4a4a" stroke-width="1"/>
<path d="M636.95 1457.1 L647.45 1457.1 L642.2 1462.5 Z" fill="#4a4a4a"/>
<path d="M2009.2 1462 L2019.8 1462 L2014.5 1456.4 Z" fill="#4a4a4a"/>
<g clip-path="url(#cmdc)">
<g fill="none" stroke="#ff6060" stroke-width="1.1" opacity="0.55">
<line x1="856.45" y1="271" x2="856.45" y2="1474"/>
<line x1="1194.4" y1="271" x2="1194.4" y2="1474"/>
<line x1="1362.4" y1="271" x2="1362.4" y2="1474"/>
<line x1="1587.6" y1="271" x2="1587.6" y2="1474"/>
<line x1="42" y1="470" x2="2552" y2="470"/>
<line x1="42" y1="479.05" x2="2552" y2="479.05"/>
<line x1="42" y1="505.35" x2="2552" y2="505.35"/>
<line x1="42" y1="1151.2" x2="2552" y2="1151.2"/>
<circle cx="1197.4" cy="810.5" r="340.7"/>
<circle cx="1587.5" cy="1151.2" r="681.3"/>
</g>
</g>
<rect x="5" y="278" width="33" height="1189" fill="#3b4453"/>
<text transform="translate(29.6 971.8) rotate(-90)" font-size="17.5" fill="#f0f0f0" textLength="201" lengthAdjust="spacingAndGlyphs">Layer Properties Manager</text>
<rect x="4" y="1471" width="38" height="3" fill="#3b4453"/>
<rect x="4" y="1474" width="2548.5" height="6" fill="#3b4453"/>
<path d="M32 1480 L122 1480 L107 1516 L17 1516 Z" fill="#3b4453"/>
<text x="42.5" y="1506" font-size="18.5" fill="#ffffff" textLength="53.5" lengthAdjust="spacingAndGlyphs" font-weight="bold">Model</text>
<text x="133.5" y="1506" font-size="18.5" fill="#f4f4f4" textLength="18" lengthAdjust="spacingAndGlyphs">a3</text>
<text x="188.8" y="1506" font-size="18.5" fill="#f4f4f4" textLength="60.6" lengthAdjust="spacingAndGlyphs">Layout1</text>
<line x1="176" y1="1486" x2="165.6" y2="1510" stroke="#4c5668" stroke-width="1.3"/>
<line x1="275" y1="1486" x2="264.6" y2="1510" stroke="#4c5668" stroke-width="1.3"/>
<line x1="333" y1="1486" x2="322.6" y2="1510" stroke="#4c5668" stroke-width="1.3"/>
<path d="M298.2 1489 V1507 M289 1498 H307.5" fill="none" stroke="#e6e6e6" stroke-width="3"/>
<rect x="1603.8" y="1484" width="72.2" height="35.7" fill="#3b4453"/>
<rect x="1682" y="1484" width="96" height="35.7" fill="#3b4453"/>
<rect x="1784" y="1484" width="36" height="35.7" fill="#3b4453"/>
<rect x="1822" y="1484" width="156.8" height="35.7" fill="#3b4453"/>
<rect x="1980.6" y="1484" width="95.4" height="35.7" fill="#3b4453"/>
<rect x="2082.6" y="1484" width="157.8" height="35.7" fill="#3b4453"/>
<rect x="2246.4" y="1484" width="60" height="35.7" fill="#3b4453"/>
<rect x="2308.4" y="1484" width="36" height="35.7" fill="#3b4453"/>
<rect x="2350.4" y="1484" width="36" height="35.7" fill="#3b4453"/>
<rect x="2390.4" y="1484" width="84" height="35.7" fill="#3b4453"/>
<rect x="2478.4" y="1484" width="72" height="35.7" fill="#3b4453"/>
<rect x="1981.2" y="1484.8" width="34.3" height="34.2" fill="#5f8fc6"/>
<rect x="2017.5" y="1484.8" width="34" height="34.2" fill="#5f8fc6"/>
<rect x="2083.2" y="1484.8" width="34" height="34.2" fill="#5f8fc6"/>
<text x="1610" y="1508.8" font-size="18.5" fill="#f4f4f4" textLength="61" lengthAdjust="spacingAndGlyphs">MODEL</text>
<text x="2198.4" y="1508.6" font-size="18.5" fill="#f4f4f4" textLength="17.2" lengthAdjust="spacingAndGlyphs">1:1</text>
<path d="M1760.5 1498.6 L1771.5 1498.6 L1766 1504.6 Z" fill="#d6d6d6"/>
<path d="M1900.5 1498.6 L1911.5 1498.6 L1906 1504.6 Z" fill="#d6d6d6"/>
<path d="M1960.5 1498.6 L1971.5 1498.6 L1966 1504.6 Z" fill="#d6d6d6"/>
<path d="M2059 1498.6 L2070 1498.6 L2064.5 1504.6 Z" fill="#d6d6d6"/>
<path d="M2222.5 1498.6 L2233.5 1498.6 L2228 1504.6 Z" fill="#d6d6d6"/>
<path d="M2288.5 1498.6 L2299.5 1498.6 L2294 1504.6 Z" fill="#d6d6d6"/>
<path d="M4 10.5 L10 8 L10 31.5 L4 34.5 Z" fill="#ea5a82"/>
<rect x="10" y="8" width="24" height="24" fill="#e70f4f"/>
<rect x="34" y="11" width="30" height="18" fill="#7a0826"/>
<text x="15.8" y="26.7" font-size="19.4" fill="#ffffff" textLength="12.6" lengthAdjust="spacingAndGlyphs" font-weight="bold">A</text>
<text x="38.5" y="24.1" font-size="11.4" fill="#ffffff" textLength="20.9" lengthAdjust="spacingAndGlyphs" font-weight="bold">CAD</text>
<text x="495" y="28.8" font-size="18.5" fill="#72c2f6" textLength="43" lengthAdjust="spacingAndGlyphs">Share</text>
<text x="956.8" y="27" font-size="18.5" fill="#f4f4f4" textLength="200" lengthAdjust="spacingAndGlyphs">Autodesk AutoCAD 2023</text>
<text x="1177.5" y="27" font-size="18.5" fill="#f4f4f4" textLength="96.3" lengthAdjust="spacingAndGlyphs">uhouse.dwg</text>
<path d="M1691 17 L1698 22.2 L1691 27.5 Z" fill="#dcdcdc"/>
<rect x="1707" y="7" width="266.3" height="30" fill="#464f60"/>
<text x="1711" y="28" font-size="17.5" fill="#9ba1ac" textLength="181.5" lengthAdjust="spacingAndGlyphs" font-style="italic">Type a keyword or phrase</text>
<text x="2049" y="28.8" font-size="18.5" fill="#f4f4f4" textLength="127" lengthAdjust="spacingAndGlyphs">tiagobonifacio...</text>
<path d="M2177 18.2 L2184 18.2 L2180.5 22.2 Z" fill="#e0e0e0"/>
<path d="M2268.5 18.55 L2276.5 18.55 L2272.5 23.05 Z" fill="#d6d6d6"/>
<rect x="2291.5" y="7" width="2" height="26.8" fill="#4a566c"/>
<path d="M2339 18.75 L2347 18.75 L2343 23.25 Z" fill="#d6d6d6"/>
<rect x="2454" y="25" width="12" height="3" fill="#e4e4e4"/>
<rect x="2489.7" y="11.5" width="17.6" height="15.8" fill="none" stroke="#e4e4e4" stroke-width="1.5"/>
<rect x="2489" y="10" width="19" height="3.2" fill="#e4e4e4"/>
<path d="M2527.8 15.8 L2541.7 26.4 M2541.7 15.8 L2527.8 26.4" fill="none" stroke="#e4e4e4" stroke-width="2.6"/>
<rect x="12" y="46" width="76" height="31" fill="#3b4453"/>
<text x="27" y="68" font-size="18.5" fill="#ffffff" textLength="48" lengthAdjust="spacingAndGlyphs">Home</text>
<text x="105.8" y="68" font-size="18.5" fill="#d9d9d9" textLength="43.5" lengthAdjust="spacingAndGlyphs">Insert</text>
<text x="179.5" y="68" font-size="18.5" fill="#d9d9d9" textLength="72.5" lengthAdjust="spacingAndGlyphs">Annotate</text>
<text x="283" y="68" font-size="18.5" fill="#d9d9d9" textLength="81.5" lengthAdjust="spacingAndGlyphs">Parametric</text>
<text x="394.5" y="68" font-size="18.5" fill="#d9d9d9" textLength="37.3" lengthAdjust="spacingAndGlyphs">View</text>
<text x="462" y="68" font-size="18.5" fill="#d9d9d9" textLength="63.5" lengthAdjust="spacingAndGlyphs">Manage</text>
<text x="556" y="68" font-size="18.5" fill="#d9d9d9" textLength="56.5" lengthAdjust="spacingAndGlyphs">Output</text>
<text x="642" y="68" font-size="18.5" fill="#d9d9d9" textLength="62.5" lengthAdjust="spacingAndGlyphs">Add-ins</text>
<text x="735.5" y="68" font-size="18.5" fill="#d9d9d9" textLength="90.8" lengthAdjust="spacingAndGlyphs">Collaborate</text>
<text x="857" y="68" font-size="18.5" fill="#d9d9d9" textLength="103.8" lengthAdjust="spacingAndGlyphs">Express Tools</text>
<text x="992" y="68" font-size="18.5" fill="#d9d9d9" textLength="115" lengthAdjust="spacingAndGlyphs">Featured Apps</text>
<rect x="1154.5" y="57" width="23" height="11" fill="#f0f0f0"/>
<path d="M1162.5 65 L1169.5 65 L1166 60.6 Z" fill="#6a6a6a"/>
<path d="M1182.5 61 L1189.5 61 L1186 65 Z" fill="#d6d6d6"/>
<rect x="6" y="76" width="2545.5" height="148" fill="#3b4453"/>
<rect x="336.6" y="78.5" width="1.8" height="144.5" fill="#262d38"/>
<rect x="710.6" y="78.5" width="1.8" height="144.5" fill="#262d38"/>
<rect x="992.6" y="78.5" width="1.8" height="144.5" fill="#262d38"/>
<rect x="1402.1" y="78.5" width="1.8" height="144.5" fill="#262d38"/>
<rect x="1644.4" y="78.5" width="1.8" height="144.5" fill="#262d38"/>
<rect x="2042.1" y="78.5" width="1.8" height="144.5" fill="#262d38"/>
<rect x="2146.4" y="78.5" width="1.8" height="144.5" fill="#262d38"/>
<rect x="2292.6" y="78.5" width="1.8" height="144.5" fill="#262d38"/>
<rect x="2428.9" y="78.5" width="1.8" height="144.5" fill="#262d38"/>
<text x="142" y="218" font-size="18.5" fill="#f2f2f2" textLength="40" lengthAdjust="spacingAndGlyphs">Draw</text>
<path d="M191.5 207.1 L203.5 207.1 L197.5 213.5 Z" fill="#d6d6d6"/>
<text x="487.5" y="218" font-size="18.5" fill="#f2f2f2" textLength="55.5" lengthAdjust="spacingAndGlyphs">Modify</text>
<path d="M553 207.1 L565 207.1 L559 213.5 Z" fill="#d6d6d6"/>
<text x="798.8" y="218" font-size="18.5" fill="#f2f2f2" textLength="88" lengthAdjust="spacingAndGlyphs">Annotation</text>
<path d="M896.5 207.1 L908.5 207.1 L902.5 213.5 Z" fill="#d6d6d6"/>
<text x="1164.5" y="218" font-size="18.5" fill="#f2f2f2" textLength="48" lengthAdjust="spacingAndGlyphs">Layers</text>
<path d="M1222 207.1 L1234 207.1 L1228 213.5 Z" fill="#d6d6d6"/>
<text x="1494" y="218" font-size="18.5" fill="#f2f2f2" textLength="41.5" lengthAdjust="spacingAndGlyphs">Block</text>
<path d="M1544.8 207.1 L1556.8 207.1 L1550.8 213.5 Z" fill="#d6d6d6"/>
<text x="1785" y="218" font-size="18.5" fill="#f2f2f2" textLength="78.8" lengthAdjust="spacingAndGlyphs">Properties</text>
<path d="M1873 207.1 L1885 207.1 L1879 213.5 Z" fill="#d6d6d6"/>
<text x="2058" y="218" font-size="18.5" fill="#f2f2f2" textLength="57" lengthAdjust="spacingAndGlyphs">Groups</text>
<path d="M2124.8 207.1 L2136.8 207.1 L2130.8 213.5 Z" fill="#d6d6d6"/>
<text x="2183" y="218" font-size="18.5" fill="#f2f2f2" textLength="55.5" lengthAdjust="spacingAndGlyphs">Utilities</text>
<path d="M2248 207.1 L2260 207.1 L2254 213.5 Z" fill="#d6d6d6"/>
<text x="2322.8" y="218" font-size="18.5" fill="#f2f2f2" textLength="77" lengthAdjust="spacingAndGlyphs">Clipboard</text>
<text x="2439" y="218" font-size="18.5" fill="#f2f2f2" textLength="35.8" lengthAdjust="spacingAndGlyphs">View</text>
<path d="M2484.5 207.1 L2496.5 207.1 L2490.5 213.5 Z" fill="#d6d6d6"/>
<path d="M2027.5 207.5 L2033.6 213.6 M2034 209 L2034 214 L2029 214" fill="none" stroke="#d0d0d0" stroke-width="1.4"/>
<path d="M2510.5 207.5 L2516.6 213.6 M2517 209 L2517 214 L2512 214" fill="none" stroke="#d0d0d0" stroke-width="1.4"/>
<rect x="997.5" y="83.2" width="88" height="106.6" fill="#46586e" stroke="#69b4ec" stroke-width="1.3"/>
<text x="1023" y="161" font-size="18.5" fill="#f2f2f2" textLength="40" lengthAdjust="spacingAndGlyphs">Layer</text>
<text x="1003" y="185.5" font-size="18.5" fill="#f2f2f2" textLength="79" lengthAdjust="spacingAndGlyphs">Properties</text>
<rect x="1088.7" y="85.5" width="309.5" height="30.8" fill="#4d586c" stroke="#2a313d" stroke-width="1.6"/>
<rect x="1770.2" y="85.5" width="268.2" height="30.8" fill="#4d586c" stroke="#2a313d" stroke-width="1.6"/>
<rect x="1770.2" y="122.3" width="268.2" height="30.8" fill="#4d586c" stroke="#2a313d" stroke-width="1.6"/>
<rect x="1770.2" y="158.6" width="268.2" height="30.8" fill="#4d586c" stroke="#2a313d" stroke-width="1.6"/>
<text x="25.5" y="161" font-size="18.5" fill="#f2f2f2" textLength="30" lengthAdjust="spacingAndGlyphs">Line</text>
<text x="73.8" y="161" font-size="18.5" fill="#f2f2f2" textLength="59" lengthAdjust="spacingAndGlyphs">Polyline</text>
<text x="153.5" y="161" font-size="18.5" fill="#f2f2f2" textLength="41.3" lengthAdjust="spacingAndGlyphs">Circle</text>
<text x="228.8" y="161" font-size="18.5" fill="#f2f2f2" textLength="25.7" lengthAdjust="spacingAndGlyphs">Arc</text>
<text x="381" y="107.5" font-size="18.5" fill="#f2f2f2" textLength="44" lengthAdjust="spacingAndGlyphs">Move</text>
<text x="381" y="143.5" font-size="18.5" fill="#f2f2f2" textLength="41" lengthAdjust="spacingAndGlyphs">Copy</text>
<text x="381" y="179.5" font-size="18.5" fill="#f2f2f2" textLength="52.8" lengthAdjust="spacingAndGlyphs">Stretch</text>
<text x="487.5" y="107.5" font-size="18.5" fill="#f2f2f2" textLength="50" lengthAdjust="spacingAndGlyphs">Rotate</text>
<text x="487.5" y="143.5" font-size="18.5" fill="#f2f2f2" textLength="47.5" lengthAdjust="spacingAndGlyphs">Mirror</text>
<text x="487.5" y="179.5" font-size="18.5" fill="#f2f2f2" textLength="38.5" lengthAdjust="spacingAndGlyphs">Scale</text>
<text x="590.8" y="107.5" font-size="18.5" fill="#f2f2f2" textLength="31.7" lengthAdjust="spacingAndGlyphs">Trim</text>
<text x="590.8" y="143.5" font-size="18.5" fill="#f2f2f2" textLength="35" lengthAdjust="spacingAndGlyphs">Fillet</text>
<text x="590.8" y="179.5" font-size="18.5" fill="#f2f2f2" textLength="41.2" lengthAdjust="spacingAndGlyphs">Array</text>
<text x="731.5" y="161" font-size="18.5" fill="#f2f2f2" textLength="29.5" lengthAdjust="spacingAndGlyphs">Text</text>
<text x="784" y="161" font-size="18.5" fill="#f2f2f2" textLength="83.5" lengthAdjust="spacingAndGlyphs">Dimension</text>
<text x="911" y="107.5" font-size="18.5" fill="#f2f2f2" textLength="44.8" lengthAdjust="spacingAndGlyphs">Linear</text>
<text x="911" y="143.5" font-size="18.5" fill="#f2f2f2" textLength="51" lengthAdjust="spacingAndGlyphs">Leader</text>
<text x="911" y="179.5" font-size="18.5" fill="#f2f2f2" textLength="39" lengthAdjust="spacingAndGlyphs">Table</text>
<text x="1210" y="107.5" font-size="18.5" fill="#f2f2f2" textLength="61.5" lengthAdjust="spacingAndGlyphs">paredes</text>
<text x="1269" y="143.5" font-size="18.5" fill="#f2f2f2" textLength="105" lengthAdjust="spacingAndGlyphs">Make Current</text>
<text x="1269" y="179.5" font-size="18.5" fill="#f2f2f2" textLength="94" lengthAdjust="spacingAndGlyphs">Match Layer</text>
<text x="1415.5" y="159" font-size="18.5" fill="#f2f2f2" textLength="42.5" lengthAdjust="spacingAndGlyphs">Insert</text>
<text x="1503" y="107.5" font-size="18.5" fill="#f2f2f2" textLength="49" lengthAdjust="spacingAndGlyphs">Create</text>
<text x="1503" y="143.5" font-size="18.5" fill="#f2f2f2" textLength="29.5" lengthAdjust="spacingAndGlyphs">Edit</text>
<text x="1503" y="179.5" font-size="18.5" fill="#f2f2f2" textLength="112" lengthAdjust="spacingAndGlyphs">Edit Attributes</text>
<text x="1670.8" y="162" font-size="18.5" fill="#f2f2f2" textLength="48" lengthAdjust="spacingAndGlyphs">Match</text>
<text x="1655" y="186.6" font-size="18.5" fill="#f2f2f2" textLength="78.8" lengthAdjust="spacingAndGlyphs">Properties</text>
<text x="1810" y="107.5" font-size="18.5" fill="#f2f2f2" textLength="58.8" lengthAdjust="spacingAndGlyphs">ByLayer</text>
<text x="1879" y="143.5" font-size="18.5" fill="#f2f2f2" textLength="59" lengthAdjust="spacingAndGlyphs">ByLayer</text>
<text x="1879" y="179.5" font-size="18.5" fill="#f2f2f2" textLength="59" lengthAdjust="spacingAndGlyphs">ByLayer</text>
<text x="2053" y="161" font-size="18.5" fill="#f2f2f2" textLength="48" lengthAdjust="spacingAndGlyphs">Group</text>
<text x="2168.8" y="161" font-size="18.5" fill="#f2f2f2" textLength="65.2" lengthAdjust="spacingAndGlyphs">Measure</text>
<text x="2314" y="161" font-size="18.5" fill="#f2f2f2" textLength="40" lengthAdjust="spacingAndGlyphs">Paste</text>
<text x="2460" y="160" font-size="18.5" fill="#f2f2f2" textLength="35" lengthAdjust="spacingAndGlyphs">Base</text>
<path d="M170.55 170.85 L178.05 170.85 L174.3 175.15 Z" fill="#d6d6d6"/>
<path d="M237.05 170.85 L244.55 170.85 L240.8 175.15 Z" fill="#d6d6d6"/>
<path d="M313.25 97.85 L320.75 97.85 L317 102.15 Z" fill="#d6d6d6"/>
<path d="M313.25 133.85 L320.75 133.85 L317 138.15 Z" fill="#d6d6d6"/>
<path d="M313.25 169.85 L320.75 169.85 L317 174.15 Z" fill="#d6d6d6"/>
<path d="M641.25 97.85 L648.75 97.85 L645 102.15 Z" fill="#d6d6d6"/>
<path d="M643.05 133.85 L650.55 133.85 L646.8 138.15 Z" fill="#d6d6d6"/>
<path d="M645.05 169.85 L652.55 169.85 L648.8 174.15 Z" fill="#d6d6d6"/>
<path d="M742.05 170.85 L749.55 170.85 L745.8 175.15 Z" fill="#d6d6d6"/>
<path d="M969.25 97.85 L976.75 97.85 L973 102.15 Z" fill="#d6d6d6"/>
<path d="M975.25 133.85 L982.75 133.85 L979 138.15 Z" fill="#d6d6d6"/>
<path d="M1432.05 168.85 L1439.55 168.85 L1435.8 173.15 Z" fill="#d6d6d6"/>
<path d="M1627.25 169.85 L1634.75 169.85 L1631 174.15 Z" fill="#d6d6d6"/>
<path d="M2197.25 170.85 L2204.75 170.85 L2201 175.15 Z" fill="#d6d6d6"/>
<path d="M2329.25 170.85 L2336.75 170.85 L2333 175.15 Z" fill="#d6d6d6"/>
<path d="M2410.25 97.85 L2417.75 97.85 L2414 102.15 Z" fill="#d6d6d6"/>
<path d="M2410.25 133.85 L2417.75 133.85 L2414 138.15 Z" fill="#d6d6d6"/>
<path d="M2473.25 169.85 L2480.75 169.85 L2477 174.15 Z" fill="#d6d6d6"/>
<path d="M1385.25 98.6 L1396.75 98.6 L1391 104.6 Z" fill="#d6d6d6"/>
<path d="M2024.25 98.6 L2035.75 98.6 L2030 104.6 Z" fill="#d6d6d6"/>
<path d="M2024.25 136 L2035.75 136 L2030 142 Z" fill="#d6d6d6"/>
<path d="M2024.25 172 L2035.75 172 L2030 178 Z" fill="#d6d6d6"/>
<rect x="1180.6" y="90.2" width="19.8" height="19.2" fill="#ff7f00" stroke="#d8c8b8" stroke-width="1.2"/>
<rect x="1779.6" y="89.6" width="22.8" height="22.8" fill="#ff7f00" stroke="#d8c8b8" stroke-width="1.2"/>
<line x1="1779" y1="137.1" x2="1875" y2="137.1" stroke="#f2f2f2" stroke-width="1.6"/>
<line x1="1779" y1="173.3" x2="1875" y2="173.3" stroke="#f2f2f2" stroke-width="1.6"/>
<rect x="2107.6" y="156.5" width="33.6" height="30.4" fill="#465a72" stroke="#69b4ec" stroke-width="1.4"/>
<path d="M104 229 L228 229 L213.5 265 L89 265 Z" fill="#3b4453"/>
<line x1="28.8" y1="235" x2="18.5" y2="258.8" stroke="#4c5668" stroke-width="1.3"/>
<line x1="286" y1="235" x2="275.6" y2="258.8" stroke="#4c5668" stroke-width="1.3"/>
<text x="42.5" y="254" font-size="18.5" fill="#f4f4f4" textLength="35.5" lengthAdjust="spacingAndGlyphs">Start</text>
<text x="114.8" y="254" font-size="18.5" fill="#ffffff" textLength="69.2" lengthAdjust="spacingAndGlyphs" font-weight="bold">uhouse*</text>
<path d="M198 241.8 L208.6 252.4 M208.6 241.8 L198 252.4" fill="none" stroke="#b4b8c4" stroke-width="2.6"/>
<path d="M250.2 238 V256 M241 247 H259.5" fill="none" stroke="#e6e6e6" stroke-width="3"/>
<rect x="4" y="265" width="2548.5" height="6" fill="#3b4453"/>
<rect x="4" y="271" width="38" height="3" fill="#3b4453"/>
<path d="M79 13 L97 13 L103.3 19.3 L103.3 31 L79 31 Z" fill="#d9d9d9"/>
<path d="M97 13 L103.3 19.3 L97 19.3 Z" fill="#f4f4f4"/>
<path d="M97 13 V19.3 H103.3" fill="none" stroke="#222933" stroke-width="0.8"/>
<path d="M115 12 L124 12 L126.4 14.6 L133.9 14.6 L133.9 19 L120.4 19 L115 30.5 Z" fill="#d9d9d9"/>
<path d="M120.8 19.9 L139.2 19.9 L132.8 32 L115 32 Z" fill="#d9d9d9"/>
<path d="M120.8 19.9 L115 32" fill="none" stroke="#222933" stroke-width="0.9"/>
<path d="M151 10 L175 10 L175 34.2 L153.2 34.2 L151 32 Z" fill="#c0c0c0"/>
<rect x="157" y="10" width="12" height="8.8" fill="#f2f2f2"/>
<rect x="157" y="28" width="12" height="6.2" fill="#f6f6f6"/>
<rect x="158.4" y="29.2" width="1.8" height="3.8" fill="#1c1c1c"/>
<path d="M187 10 L208 10 L208 31.6 L189.2 31.6 L187 29.4 Z" fill="#c0c0c0"/>
<rect x="191" y="10" width="13" height="8.4" fill="#f2f2f2"/>
<rect x="191" y="25.6" width="12" height="6" fill="#f6f6f6"/>
<rect x="192.4" y="26.8" width="1.8" height="3.6" fill="#1c1c1c"/>
<g transform="translate(210.6 22.4) rotate(134.502)"><path d="M2 -2.7 H3.4 V2.7 H2 A2.7 2.7 0 0 1 2 -2.7 Z" fill="#f05f5f"/><rect x="3.2" y="-2.7" width="8.86407" height="5.4" fill="#f9c866"/><polygon points="12.0641,-2.7 16.2641,0 12.0641,2.7" fill="#d6d6d6"/></g>
<rect x="224" y="10" width="14.3" height="23" fill="#d9d9d9" rx="1.6"/>
<rect x="225.2" y="11.2" width="11.9" height="18.6" fill="#6a6a6a"/>
<rect x="229.6" y="31" width="3.2" height="1" fill="#8a8a8a"/>
<path d="M233.8 22.8 L239.6 22.8 L241 24.4 L245.6 24.4 L245.6 27 L236.6 27 L233.8 32.6 Z" fill="#f0c060" stroke="#222933" stroke-width="0.5"/>
<path d="M236.6 27.2 L246.4 27.2 L243.4 32.8 L233.6 32.8 Z" fill="#fbd477"/>
<rect x="266" y="10" width="14" height="23" fill="#d9d9d9" rx="1.6"/>
<rect x="267.2" y="11.2" width="11.6" height="18.6" fill="#6a6a6a"/>
<rect x="271.4" y="31" width="3.2" height="1" fill="#8a8a8a"/>
<path d="M261.8 17.4 L268.6 17.4 L268.6 13.6 L276.4 18.5 L268.6 23.4 L268.6 19.6 L261.8 19.6 Z" fill="#6cc2fa"/>
<rect x="299.8" y="10" width="14.5" height="8" fill="#ffffff"/>
<rect x="294.8" y="14" width="24.4" height="8.4" fill="#efefef"/>
<rect x="294.8" y="22.2" width="24.4" height="7.6" fill="#bdbdbd"/>
<rect x="299.8" y="26.4" width="14.5" height="8" fill="#7fc8f8" stroke="#ffffff" stroke-width="1.1"/>
<path d="M331 22 L342.8 14.6 V18.6 Q353.4 18.8 355.2 28 Q350.4 23.8 342.8 24.8 V29.2 Z" fill="#dcdcdc"/>
<path d="M408.6 22 L396.8 14.6 V18.6 Q386.2 18.8 384.4 28 Q389.2 23.8 396.8 24.8 V29.2 Z" fill="#5e6572"/>
<path d="M364.9 19.8 L372.5 19.8 L368.7 24.2 Z" fill="#d6d6d6"/>
<path d="M418.8 19.8 L426.4 19.8 L422.6 24.2 Z" fill="#8a8f98"/>
<rect x="438.8" y="15.2" width="12.2" height="1.9" fill="#dcdcdc"/>
<path d="M438.8 19.7 L451 19.7 L444.9 26 Z" fill="#dcdcdc"/>
<path d="M487 11 L463.2 21.8 L471.6 24.6 Z" fill="#6fc3f7"/>
<path d="M487 11 L472.6 25.2 L473 31.6 L476.4 26.8 Z" fill="#6fc3f7"/>
<path d="M487 11 L474.8 25.6 L483.4 31.8 Z" fill="#6fc3f7"/>
<circle cx="1990.7" cy="19.7" r="8.6" fill="#4a505c" stroke="#f4f4f4" stroke-width="1.5"/>
<line x1="1997.6" y1="26.6" x2="2003.6" y2="32.4" stroke="#dba36a" stroke-width="1.8"/>
<ellipse cx="2029" cy="16.2" rx="6.3" ry="7.2" fill="#87cbf9"/>
<path d="M2016.9 32 Q2017 24.6 2024 22.8 Q2029 26 2034 22.8 Q2041 24.6 2041.2 32 Z" fill="#87cbf9"/>
<path d="M2203.4 12.4 L2206.4 13.6 L2210.8 26.8 H2221.6" fill="none" stroke="#d8d8d8" stroke-width="1.4"/>
<path d="M2207.6 16.4 L2223.2 16.4 L2220.6 24.6 L2210.2 24.6 Z" fill="#a8a8a8"/>
<circle cx="2211.4" cy="30.4" r="1.7" fill="#d8d8d8"/>
<circle cx="2219.4" cy="30.4" r="1.7" fill="#d8d8d8"/>
<line x1="2209.6" y1="28" x2="2221.6" y2="28" stroke="#d8d8d8" stroke-width="1.2"/>
<path d="M2248.8 12.6 L2240.4 29.4 H2257.2 Z" fill="none" stroke="#e2e2e2" stroke-width="3.4" stroke-linejoin="round"/>
<circle cx="2248.8" cy="12.4" r="3" fill="#e2e2e2"/>
<circle cx="2240.4" cy="29.4" r="3" fill="#e2e2e2"/>
<circle cx="2257.2" cy="29.4" r="3" fill="#e2e2e2"/>
<circle cx="2317" cy="22" r="12" fill="#dedede"/>
<text x="2312.2" y="28.6" font-size="19" fill="#6a6a6a" textLength="9.4" lengthAdjust="spacingAndGlyphs">?</text>
<line x1="18.2" y1="134" x2="62" y2="90.2" stroke="#e6e6e6" stroke-width="1.25"/>
<rect x="16.1" y="131.9" width="4.2" height="4.2" fill="#6cbcf2"/>
<rect x="59.9" y="88.1" width="4.2" height="4.2" fill="#6cbcf2"/>
<path d="M81 124 H112 A12.45 12.45 0 1 0 112 100" fill="none" stroke="#e6e6e6" stroke-width="1.25"/>
<rect x="78.9" y="121.9" width="4.2" height="4.2" fill="#6cbcf2"/>
<rect x="109.9" y="121.9" width="4.2" height="4.2" fill="#6cbcf2"/>
<rect x="109.9" y="97.9" width="4.2" height="4.2" fill="#6cbcf2"/>
<circle cx="174" cy="112.2" r="23.8" fill="none" stroke="#e6e6e6" stroke-width="1.25"/>
<line x1="174" y1="112.2" x2="187" y2="99.4" stroke="#6cbcf2" stroke-width="1.3"/>
<path d="M190.4 96 L183.2 98.4 L188 103.2 Z" fill="#6cbcf2"/>
<rect x="171.9" y="110.1" width="4.2" height="4.2" fill="#6cbcf2"/>
<path d="M222 133.2 Q224 100 263.8 91" fill="none" stroke="#e6e6e6" stroke-width="1.25"/>
<rect x="219.9" y="131.1" width="4.2" height="4.2" fill="#6cbcf2"/>
<rect x="232.9" y="101.9" width="4.2" height="4.2" fill="#6cbcf2"/>
<rect x="261.7" y="88.9" width="4.2" height="4.2" fill="#6cbcf2"/>
<rect x="281" y="94" width="20.6" height="14.4" fill="none" stroke="#e6e6e6" stroke-width="1.25"/>
<rect x="279.3" y="92.3" width="3.4" height="3.4" fill="#6cbcf2"/>
<rect x="299.9" y="106.7" width="3.4" height="3.4" fill="#6cbcf2"/>
<ellipse cx="290.6" cy="137.4" rx="11.3" ry="8.5" fill="none" stroke="#e6e6e6" stroke-width="1.25"/>
<rect x="289" y="127.4" width="3.2" height="3.2" fill="#6cbcf2"/>
<rect x="289" y="135.8" width="3.2" height="3.2" fill="#6cbcf2"/>
<rect x="300.2" y="135.8" width="3.2" height="3.2" fill="#6cbcf2"/>
<rect x="282.6" y="164.8" width="16.8" height="16.8" fill="#3a4c62"/>
<g stroke="#6cbcf2" stroke-width="1.2"><path d="M283 172 L290 165 M283 178.6 L297 165 M285.6 181.4 L299.2 167.8 M292 181.4 L299.2 174.2"/></g>
<path d="M279.4 164.8 H302.8 M279.4 181.6 H302.8 M282.6 161.6 V185 M299.4 161.6 V185" fill="none" stroke="#e6e6e6" stroke-width="1.25"/>
<path d="M361 92.2 V110.2 M352 101.2 H370" fill="none" stroke="#ffffff" stroke-width="2.2"/>
<path d="M361 89 L365.6 94.8 L356.4 94.8 Z" fill="#ffffff"/>
<path d="M361 113.4 L356.4 107.6 L365.6 107.6 Z" fill="#ffffff"/>
<path d="M348.8 101.2 L354.6 96.6 L354.6 105.8 Z" fill="#ffffff"/>
<path d="M373.2 101.2 L367.4 105.8 L367.4 96.6 Z" fill="#ffffff"/>
<circle cx="354.4" cy="130.6" r="5" fill="none" stroke="#e6e6e6" stroke-width="1.3"/>
<path d="M361.4 127.6 H367.8 V132" fill="none" stroke="#e6e6e6" stroke-width="1.3"/>
<path d="M365 131.4 L370.6 131.4 L367.8 136 Z" fill="#ffffff"/>
<circle cx="359.2" cy="143.6" r="5.2" fill="none" stroke="#6cbcf2" stroke-width="1.3"/>
<circle cx="368.2" cy="143.6" r="5.2" fill="none" stroke="#6cbcf2" stroke-width="1.3"/>
<path d="M359.6 179.6 V161.8 H349.4 V184.6 H359.6 V179.6" fill="none" stroke="#e6e6e6" stroke-width="1.3"/>
<path d="M355.2 179.6 H362" fill="none" stroke="#e6e6e6" stroke-width="1.3"/>
<path d="M361.4 177 L365.4 179.6 L361.4 182.2 Z" fill="#ffffff"/>
<path d="M362 161.8 H365.6 L372.6 184.6 H361.4" fill="none" stroke="#6cbcf2" stroke-width="1.3"/>
<path d="M472.2 93.2 A10.5 10.5 0 1 0 477.8 101" fill="none" stroke="#e6e6e6" stroke-width="1.4"/>
<path d="M468.2 89 L474.6 92.6 L468.6 96.2 Z" fill="#ffffff"/>
<path d="M455.8 147.6 L465.6 147.6 L465.6 128 Z" fill="none" stroke="#e6e6e6" stroke-width="1.3"/>
<path d="M467.4 128 L467.4 147.6 L477.2 147.6 Z" fill="none" stroke="#6cbcf2" stroke-width="1.3"/>
<path d="M455.8 172.4 V162.2 H478.2 V184.4 H468.6" fill="none" stroke="#6cbcf2" stroke-width="1.3"/>
<rect x="455.8" y="173.6" width="11.4" height="10.8" fill="none" stroke="#e6e6e6" stroke-width="1.3"/>
<line x1="558.9" y1="91.4" x2="561.9" y2="91.4" stroke="#6cbcf2" stroke-width="1.3"/>
<line x1="563" y1="91.4" x2="566" y2="91.4" stroke="#6cbcf2" stroke-width="1.3"/>
<line x1="567.1" y1="91.4" x2="570" y2="91.4" stroke="#6cbcf2" stroke-width="1.3"/>
<line x1="575.1" y1="91.4" x2="583.1" y2="91.4" stroke="#e6e6e6" stroke-width="1.3"/>
<path d="M571 88.8 L574 92 L574.2 104 L570.7 104 Z" fill="#ffffff" stroke="#333b49" stroke-width="0.7"/>
<path d="M562.9 92.8 L570.7 100.4 L570.7 104 L569.6 104.4 L562.9 97.4 Z" fill="#ffffff" stroke="#333b49" stroke-width="0.7"/>
<rect x="571.1" y="102.1" width="1.7" height="1.7" fill="#1e2530"/>
<ellipse cx="571" cy="109" rx="2.4" ry="3.3" fill="none" stroke="#ffffff" stroke-width="1.8" transform="rotate(8 571 109)"/>
<ellipse cx="576.8" cy="106.9" rx="3.1" ry="2.2" fill="none" stroke="#ffffff" stroke-width="1.8" transform="rotate(38 576.8 106.9)"/>
<path d="M559.8 138.6 Q560.4 126 573 125.2" fill="none" stroke="#6cbcf2" stroke-width="1.3"/>
<line x1="574.6" y1="125.2" x2="583" y2="125.2" stroke="#e6e6e6" stroke-width="1.3"/>
<line x1="559.8" y1="141" x2="559.8" y2="148.6" stroke="#e6e6e6" stroke-width="1.3"/>
<rect x="561.6" y="164" width="8" height="7.4" fill="none" stroke="#e6e6e6" stroke-width="1.3"/>
<rect x="572.6" y="164" width="8" height="7.4" fill="none" stroke="#6cbcf2" stroke-width="1.3"/>
<rect x="561.6" y="174.6" width="8" height="7.4" fill="none" stroke="#6cbcf2" stroke-width="1.3"/>
<rect x="572.6" y="174.6" width="8" height="7.4" fill="none" stroke="#6cbcf2" stroke-width="1.3"/>
<path d="M694.4 88.6 L695.3 89.2 L695.3 97.8 L685.2 107.1 L681 102.8 Z" fill="#f9c866"/>
<path d="M681 102.8 L685.2 107.1 L683 109.2 L678.7 105 Z" fill="#ffffff"/>
<path d="M678.7 105 L683 109.2 L681 111.2 L679.1 112 L676.9 110.6 L676 108.4 L676.7 106.6 Z" fill="#f86464"/>
<line x1="670.9" y1="112.5" x2="676.1" y2="112.5" stroke="#e6e6e6" stroke-width="1.3"/>
<line x1="682.9" y1="112.5" x2="695.1" y2="112.5" stroke="#6cbcf2" stroke-width="1.3"/>
<path d="M671.2 132.2 H687.6 V147 H671.2 Z M671.2 132.2 L677.4 126.6 H693.8 L687.6 132.2 M693.8 126.6 V141.4 L687.6 147" fill="none" stroke="#6cbcf2" stroke-width="1.2"/>
<rect x="673.4" y="134.2" width="12.2" height="11" fill="none" stroke="#e6e6e6" stroke-width="1.2"/>
<path d="M695 165.2 H679 A7.6 7.6 0 0 0 679 180.4 H695" fill="none" stroke="#6cbcf2" stroke-width="1.3"/>
<path d="M695 169.4 H680 A3.7 3.7 0 0 0 680 176.8 H695" fill="none" stroke="#e6e6e6" stroke-width="1.3"/>
<text x="726.2" y="133" font-size="61" fill="#dcdcdc" textLength="40.4" lengthAdjust="spacingAndGlyphs">A</text>
<path d="M802.4 88 V136 M849.8 88 V136 M808 97.6 H844" fill="none" stroke="#e6e6e6" stroke-width="1.3"/>
<path d="M803.4 97.6 L809.4 94.4 L809.4 100.8 Z" fill="#e6e6e6"/>
<path d="M848.8 97.6 L842.8 94.4 L842.8 100.8 Z" fill="#e6e6e6"/>
<polygon transform="translate(826 129.2) rotate(180)" points="17.9,0 9,-2.4 9,2.4" fill="#f9c866"/>
<polygon transform="translate(826 129.2) rotate(225)" points="17.9,0 9,-2.4 9,2.4" fill="#f9c866"/>
<polygon transform="translate(826 129.2) rotate(270)" points="17.9,0 9,-2.4 9,2.4" fill="#f9c866"/>
<polygon transform="translate(826 129.2) rotate(315)" points="17.9,0 9,-2.4 9,2.4" fill="#f9c866"/>
<polygon transform="translate(826 129.2) rotate(360)" points="17.9,0 9,-2.4 9,2.4" fill="#f9c866"/>
<path d="M879.6 91.2 V110.8 M902.6 91.2 V110.8" fill="none" stroke="#e6e6e6" stroke-width="1.3"/>
<line x1="884" y1="97.8" x2="898" y2="97.8" stroke="#6cbcf2" stroke-width="1.3"/>
<path d="M880.8 97.8 L885.4 95.2 L885.4 100.4 Z" fill="#6cbcf2"/>
<path d="M901.4 97.8 L896.8 95.2 L896.8 100.4 Z" fill="#6cbcf2"/>
<circle cx="897.8" cy="132.4" r="4" fill="none" stroke="#e6e6e6" stroke-width="1.3"/>
<path d="M893.8 132.4 H888.6 L882.6 142" fill="none" stroke="#e6e6e6" stroke-width="1.3"/>
<path d="M880 146.2 L881 139.4 L886.2 142.6 Z" fill="#e6e6e6"/>
<rect x="880.4" y="163.6" width="21.2" height="17.8" fill="none" stroke="#e6e6e6" stroke-width="1.3"/>
<path d="M880.4 169 H901.6 M880.4 173.2 H901.6 M880.4 177.4 H901.6 M887.4 169 V181.4 M894.6 169 V181.4" fill="none" stroke="#e6e6e6" stroke-width="1.1"/>
<path d="M1032.9 106.2 L1059.2 106.2 L1044.2 123.7 L1017.9 123.7 Z" fill="#d9d9d9"/>
<path d="M1032.9 97.2 L1059.2 97.2 L1044.2 114.7 L1017.9 114.7 Z" fill="#46586e" stroke="#46586e" stroke-width="2"/>
<path d="M1032.9 97.2 L1059.2 97.2 L1044.2 114.7 L1017.9 114.7 Z" fill="#d9d9d9"/>
<path d="M1032.9 88.2 L1059.2 88.2 L1044.2 105.7 L1017.9 105.7 Z" fill="#46586e" stroke="#46586e" stroke-width="2"/>
<path d="M1032.9 88.2 L1059.2 88.2 L1044.2 105.7 L1017.9 105.7 Z" fill="#d9d9d9"/>
<rect x="1045.1" y="108.2" width="21.9" height="28.6" fill="#46586e"/>
<rect x="1045.9" y="109" width="20.3" height="27" fill="#f2f2f2"/>
<rect x="1048.5" y="111.5" width="13.6" height="10" fill="#7cc6fa" stroke="#4a5866" stroke-width="1"/>
<rect x="1051.8" y="106.4" width="6" height="2.6" fill="#cfcfcf"/>
<path d="M1050 127.8 H1062 M1050 131.4 H1062 M1053 126.2 V129.4 M1059 129.8 V133" fill="none" stroke="#6a6a6a" stroke-width="1"/>
<circle cx="1104.5" cy="96.8" r="7.6" fill="#ffd27a"/>
<path d="M1100.85 105.2 H1108.15 V106.4 A3.648 4.56 0 0 1 1100.85 106.4 Z" fill="#f2f2f2"/>
<circle cx="1132.5" cy="99.6" r="7" fill="#ffd27a"/>
<line x1="1141.1" y1="99.6" x2="1143.9" y2="99.6" stroke="#ffd27a" stroke-width="1.3"/>
<line x1="1138.58" y1="105.681" x2="1140.56" y2="107.661" stroke="#ffd27a" stroke-width="1.3"/>
<line x1="1132.5" y1="108.2" x2="1132.5" y2="111" stroke="#ffd27a" stroke-width="1.3"/>
<line x1="1126.42" y1="105.681" x2="1124.44" y2="107.661" stroke="#ffd27a" stroke-width="1.3"/>
<line x1="1123.9" y1="99.6" x2="1121.1" y2="99.6" stroke="#ffd27a" stroke-width="1.3"/>
<line x1="1126.42" y1="93.5189" x2="1124.44" y2="91.539" stroke="#ffd27a" stroke-width="1.3"/>
<line x1="1132.5" y1="91" x2="1132.5" y2="88.2" stroke="#ffd27a" stroke-width="1.3"/>
<line x1="1138.58" y1="93.5189" x2="1140.56" y2="91.539" stroke="#ffd27a" stroke-width="1.3"/>
<rect x="1150" y="98.4" width="16.8" height="12.4" fill="#ffd27a"/>
<rect x="1157.7" y="102.368" width="1.4" height="4.96" fill="#3b4453"/>
<path d="M1160.42 98.4 V95 A4.704 5.04 0 0 1 1169.82 95 V98" fill="none" stroke="#ffd27a" stroke-width="1.8"/>
<path d="M1101.7 126.2 L1113.1 126.2 L1104.4 134.9 L1093 134.9 Z" fill="#d9d9d9"/>
<circle cx="1112.5" cy="140.7" r="4.7" fill="#5fd3dc"/>
<path d="M1110.24 146.2 H1114.76 V147.4 A2.256 2.82 0 0 1 1110.24 147.4 Z" fill="#f0f0f0"/>
<path d="M1138.7 135.1 L1150.1 135.1 L1141.4 143.8 L1130 143.8 Z" fill="#86cbfb"/>
<path d="M1138.7 130.1 L1150.1 130.1 L1141.4 138.8 L1130 138.8 Z" fill="#3b4453" stroke="#3b4453" stroke-width="1.9"/>
<path d="M1138.7 130.1 L1150.1 130.1 L1141.4 138.8 L1130 138.8 Z" fill="#d9d9d9"/>
<path d="M1138.7 125.1 L1150.1 125.1 L1141.4 133.8 L1130 133.8 Z" fill="#3b4453" stroke="#3b4453" stroke-width="1.9"/>
<path d="M1138.7 125.1 L1150.1 125.1 L1141.4 133.8 L1130 133.8 Z" fill="#d9d9d9"/>
<path d="M1152.9 139.2 L1146.4 145.7" fill="none" stroke="#f4f4f4" stroke-width="1.5"/>
<path d="M1143 149.1 L1144.6 142.6 L1149.5 147.5 Z" fill="#f4f4f4"/>
<path d="M1173.4 126.2 L1184.8 126.2 L1176.1 134.9 L1164.7 134.9 Z" fill="#d9d9d9"/>
<line x1="1175.9" y1="141.5" x2="1187.1" y2="141.5" stroke="#5fd3dc" stroke-width="1.2"/>
<line x1="1177.54" y1="137.54" x2="1185.46" y2="145.46" stroke="#5fd3dc" stroke-width="1.2"/>
<line x1="1181.5" y1="135.9" x2="1181.5" y2="147.1" stroke="#5fd3dc" stroke-width="1.2"/>
<line x1="1185.46" y1="137.54" x2="1177.54" y2="145.46" stroke="#5fd3dc" stroke-width="1.2"/>
<circle cx="1181.5" cy="141.5" r="3.5" fill="none" stroke="#5fd3dc" stroke-width="1.1"/>
<path d="M1209.4 126.2 L1220.8 126.2 L1212.1 134.9 L1200.7 134.9 Z" fill="#d9d9d9"/>
<rect x="1214" y="141.2" width="11" height="7.8" fill="#5fd3dc"/>
<rect x="1218.8" y="143.696" width="1.4" height="3.12" fill="#3b4453"/>
<path d="M1216.42 141.2 V138.6 A3.08 3.52 0 0 1 1222.58 138.6 V141.2" fill="none" stroke="#5fd3dc" stroke-width="1.7"/>
<path d="M1246 140.1 L1261.3 140.1 L1252.6 148.8 L1237 148.8 Z" fill="#d9d9d9"/>
<path d="M1246 135.1 L1261.3 135.1 L1252.6 143.8 L1237 143.8 Z" fill="#3b4453" stroke="#3b4453" stroke-width="1.9"/>
<path d="M1246 135.1 L1261.3 135.1 L1252.6 143.8 L1237 143.8 Z" fill="#d9d9d9"/>
<path d="M1246 130.1 L1261.3 130.1 L1252.6 138.8 L1237 138.8 Z" fill="#3b4453" stroke="#3b4453" stroke-width="1.9"/>
<path d="M1246 130.1 L1261.3 130.1 L1252.6 138.8 L1237 138.8 Z" fill="#86cbfb"/>
<circle cx="1249.3" cy="129.4" r="4.8" fill="#d4d4d4" stroke="#3b4453" stroke-width="0.8"/>
<path d="M1101.7 171.2 L1113.1 171.2 L1104.4 179.9 L1093 179.9 Z" fill="#d9d9d9"/>
<path d="M1101.7 166.2 L1113.1 166.2 L1104.4 174.9 L1093 174.9 Z" fill="#3b4453" stroke="#3b4453" stroke-width="1.9"/>
<path d="M1101.7 166.2 L1113.1 166.2 L1104.4 174.9 L1093 174.9 Z" fill="#d9d9d9"/>
<path d="M1101.7 161.2 L1113.1 161.2 L1104.4 169.9 L1093 169.9 Z" fill="#3b4453" stroke="#3b4453" stroke-width="1.9"/>
<path d="M1101.7 161.2 L1113.1 161.2 L1104.4 169.9 L1093 169.9 Z" fill="#d9d9d9"/>
<circle cx="1112.5" cy="176.7" r="4.7" fill="#ffd27a"/>
<path d="M1110.24 182.2 H1114.76 V183.4 A2.256 2.82 0 0 1 1110.24 183.4 Z" fill="#f0f0f0"/>
<path d="M1138.7 171.2 L1150.1 171.2 L1141.4 179.9 L1130 179.9 Z" fill="#86cbfb"/>
<path d="M1138.7 166.2 L1150.1 166.2 L1141.4 174.9 L1130 174.9 Z" fill="#3b4453" stroke="#3b4453" stroke-width="1.9"/>
<path d="M1138.7 166.2 L1150.1 166.2 L1141.4 174.9 L1130 174.9 Z" fill="#d9d9d9"/>
<path d="M1138.7 161.2 L1150.1 161.2 L1141.4 169.9 L1130 169.9 Z" fill="#3b4453" stroke="#3b4453" stroke-width="1.9"/>
<path d="M1138.7 161.2 L1150.1 161.2 L1141.4 169.9 L1130 169.9 Z" fill="#d9d9d9"/>
<path d="M1143.1 184.9 L1149.8 178.2" fill="none" stroke="#f4f4f4" stroke-width="1.5"/>
<path d="M1153 175 L1151.4 181.5 L1146.5 176.6 Z" fill="#f4f4f4"/>
<path d="M1173.4 171.2 L1184.8 171.2 L1176.1 179.9 L1164.7 179.9 Z" fill="#d9d9d9"/>
<path d="M1173.4 166.2 L1184.8 166.2 L1176.1 174.9 L1164.7 174.9 Z" fill="#3b4453" stroke="#3b4453" stroke-width="1.9"/>
<path d="M1173.4 166.2 L1184.8 166.2 L1176.1 174.9 L1164.7 174.9 Z" fill="#d9d9d9"/>
<path d="M1173.4 161.2 L1184.8 161.2 L1176.1 169.9 L1164.7 169.9 Z" fill="#3b4453" stroke="#3b4453" stroke-width="1.9"/>
<path d="M1173.4 161.2 L1184.8 161.2 L1176.1 169.9 L1164.7 169.9 Z" fill="#d9d9d9"/>
<circle cx="1181.9" cy="178" r="4.3" fill="#ffd27a" stroke="#3b4453" stroke-width="0.8"/>
<rect x="1188.2" y="176.9" width="2.2" height="2.2" fill="#ffd27a"/>
<rect x="1186.03" y="182.133" width="2.2" height="2.2" fill="#ffd27a"/>
<rect x="1180.8" y="184.3" width="2.2" height="2.2" fill="#ffd27a"/>
<rect x="1175.57" y="182.133" width="2.2" height="2.2" fill="#ffd27a"/>
<rect x="1173.4" y="176.9" width="2.2" height="2.2" fill="#ffd27a"/>
<rect x="1175.57" y="171.667" width="2.2" height="2.2" fill="#ffd27a"/>
<rect x="1180.8" y="169.5" width="2.2" height="2.2" fill="#ffd27a"/>
<rect x="1186.03" y="171.667" width="2.2" height="2.2" fill="#ffd27a"/>
<path d="M1209.4 162.2 L1220.8 162.2 L1212.1 170.9 L1200.7 170.9 Z" fill="#d9d9d9"/>
<rect x="1211" y="177.3" width="11.1" height="7.7" fill="#ffd27a"/>
<rect x="1215.85" y="179.764" width="1.4" height="3.08" fill="#3b4453"/>
<path d="M1217.88 177.3 V173.9 A3.108 3.33 0 0 1 1224.1 173.9 V176.9" fill="none" stroke="#ffd27a" stroke-width="1.8"/>
<path d="M1245.4 171.2 L1256.8 171.2 L1248.1 179.9 L1236.7 179.9 Z" fill="#d9d9d9"/>
<path d="M1245.4 166.2 L1256.8 166.2 L1248.1 174.9 L1236.7 174.9 Z" fill="#3b4453" stroke="#3b4453" stroke-width="1.9"/>
<path d="M1245.4 166.2 L1256.8 166.2 L1248.1 174.9 L1236.7 174.9 Z" fill="#d9d9d9"/>
<path d="M1245.4 161.2 L1256.8 161.2 L1248.1 169.9 L1236.7 169.9 Z" fill="#3b4453" stroke="#3b4453" stroke-width="1.9"/>
<path d="M1245.4 161.2 L1256.8 161.2 L1248.1 169.9 L1236.7 169.9 Z" fill="#d9d9d9"/>
<path d="M1248.6 178 L1254 174.7 L1259.8 180.9 L1255.5 184.9 Z" fill="#ffd27a" stroke="#3b4453" stroke-width="0.8"/>
<path d="M1254 174.7 L1257.4 172.6 L1259.6 174.8 L1261.8 173 L1263.4 174.8 L1261.6 176.8 L1263.6 179 L1259.8 180.9 Z" fill="#f6f6f6" stroke="#3b4453" stroke-width="0.6"/>
<path d="M1434.2 85.2 L1452.6 85.2 L1460 92.8 L1460 122 L1434.2 122 Z" fill="#86cbfb"/>
<path d="M1452.6 85.2 L1460 92.8 L1452.6 92.8 Z" fill="#cdeafe"/>
<rect x="1414" y="101.4" width="29.6" height="20.6" fill="#6b7383" stroke="#dcdcdc" stroke-width="1.3"/>
<circle cx="1443.6" cy="122.4" r="10.2" fill="#6b7383" stroke="#dcdcdc" stroke-width="1.3"/>
<path d="M1443.6 112.6 V122 H1434" fill="none" stroke="#dcdcdc" stroke-width="1.2" opacity="0.8"/>
<rect x="1412" y="120.6" width="4.2" height="4.2" fill="#dcdcdc"/>
<rect x="1472.6" y="98.6" width="14.2" height="10" fill="#6b7383" stroke="#dcdcdc" stroke-width="1.2"/>
<circle cx="1486.8" cy="108.6" r="4.2" fill="#6b7383" stroke="#dcdcdc" stroke-width="1.2"/>
<rect x="1470.8" y="107" width="3.2" height="3.2" fill="#dcdcdc"/>
<rect x="1472.6" y="134" width="14.2" height="10" fill="#6b7383" stroke="#dcdcdc" stroke-width="1.2"/>
<circle cx="1486.8" cy="144" r="4.2" fill="#6b7383" stroke="#dcdcdc" stroke-width="1.2"/>
<rect x="1470.8" y="142.4" width="3.2" height="3.2" fill="#dcdcdc"/>
<path d="M1489.91 89.0972 L1490.3 93.0385 L1494.04 91.7291 L1491.53 94.794 L1495.1 96.5113 L1491.16 96.9044 L1492.47 100.643 L1489.41 98.1336 L1487.69 101.703 L1487.3 97.7615 L1483.56 99.0709 L1486.07 96.006 L1482.5 94.2887 L1486.44 93.8956 L1485.13 90.1574 L1488.19 92.6664 Z" fill="#ffd27a"/>
<g transform="translate(1494.4 126.4) rotate(135.507)"><path d="M2 -2.3 H3.4 V2.3 H2 A2.3 2.3 0 0 1 2 -2.3 Z" fill="#f05f5f"/><rect x="3.2" y="-2.3" width="8.58124" height="4.6" fill="#f9c866"/><polygon points="11.7812,-2.3 15.9812,0 11.7812,2.3" fill="#d6d6d6"/></g>
<path d="M1471.2 163.8 L1481.8 163.8 L1493 175 L1483 184.6 L1471.2 172.4 Z" fill="#d6d6d6"/>
<circle cx="1475" cy="167.4" r="1.3" fill="#3b4453"/>
<path d="M1476 171 L1484 179 M1479 168.6 L1487 176.6" fill="none" stroke="#6a6a6a" stroke-width="1" stroke-dasharray="2 1.2"/>
<g transform="translate(1494.4 162.2) rotate(134.493)"><path d="M2 -2.3 H3.4 V2.3 H2 A2.3 2.3 0 0 1 2 -2.3 Z" fill="#f05f5f"/><rect x="3.2" y="-2.3" width="8.58124" height="4.6" fill="#f9c866"/><polygon points="11.7812,-2.3 15.9812,0 11.7812,2.3" fill="#d6d6d6"/></g>
<rect x="1672" y="89" width="30.3" height="42" fill="#dcdcdc"/>
<rect x="1675.4" y="92.2" width="20.6" height="15.6" fill="#8accfa" stroke="#4a4a4a" stroke-width="1"/>
<path d="M1677 115.4 H1695 M1677 123.6 H1695" fill="none" stroke="#5a5a5a" stroke-width="1"/>
<rect x="1680.2" y="113.2" width="1.8" height="4.6" fill="#4a4a4a"/>
<rect x="1690.2" y="121.4" width="1.8" height="4.6" fill="#4a4a4a"/>
<path d="M1693.8 123.6 L1701.5 119.8 L1714 133.4 L1707.9 137.2 Z" fill="#f9c866" stroke="#323a48" stroke-width="0.9"/>
<path d="M1701.5 119.8 L1705.3 116.1 L1707.5 116.1 L1710.6 119.1 L1715.5 116.1 L1718.1 118.7 L1714.7 122.1 L1717.7 125.5 L1717.7 128.5 L1714 133.4 Z" fill="#f4f4f4" stroke="#323a48" stroke-width="0.9" stroke-linejoin="round"/>
<path d="M1754 101 L1748.00 90.61 A12 12 0 0 1 1760.00 90.61 Z" fill="#ffc440"/>
<path d="M1754 101 L1760.00 90.61 A12 12 0 0 1 1766.00 101.00 Z" fill="#ff9540"/>
<path d="M1754 101 L1766.00 101.00 A12 12 0 0 1 1760.00 111.39 Z" fill="#e85555"/>
<path d="M1754 101 L1760.00 111.39 A12 12 0 0 1 1748.00 111.39 Z" fill="#8a4fff"/>
<path d="M1754 101 L1748.00 111.39 A12 12 0 0 1 1742.00 101.00 Z" fill="#12aacc"/>
<path d="M1754 101 L1742.00 101.00 A12 12 0 0 1 1748.00 90.61 Z" fill="#4fcb85"/>
<rect x="1742" y="124.8" width="24" height="1.3" fill="#dcdcdc"/>
<rect x="1742" y="129.1" width="24" height="3" fill="#dcdcdc"/>
<rect x="1742" y="135" width="24" height="4.8" fill="#dcdcdc"/>
<rect x="1742" y="142.9" width="24" height="6" fill="#dcdcdc"/>
<line x1="1742" y1="164.4" x2="1765" y2="164.4" stroke="#dcdcdc" stroke-width="1.3" stroke-dasharray="1.6 2"/>
<line x1="1742" y1="168.4" x2="1765" y2="168.4" stroke="#dcdcdc" stroke-width="1.3" stroke-dasharray="5 1.2"/>
<line x1="1742" y1="172.4" x2="1765" y2="172.4" stroke="#dcdcdc" stroke-width="1.3"/>
<line x1="1742" y1="176.5" x2="1765" y2="176.5" stroke="#dcdcdc" stroke-width="1.3" stroke-dasharray="3.4 1.2 7 1.2"/>
<line x1="1742" y1="180.6" x2="1765" y2="180.6" stroke="#dcdcdc" stroke-width="1.3" stroke-dasharray="8 1.4"/>
<path d="M2060 96.8 H2054.6 V135.8 H2060 M2081.4 135.8 H2086.8 V114.2" fill="none" stroke="#ffffff" stroke-width="1.3"/>
<rect x="2063.4" y="101.6" width="14" height="10.8" fill="#4a6a8c" stroke="#6cbcf2" stroke-width="1.2"/>
<circle cx="2070.4" cy="124.6" r="7.2" fill="#6b7383" stroke="#dcdcdc" stroke-width="1.2"/>
<path d="M2089.73 88.9207 L2090.64 96.7195 L2097.9 93.7375 L2093.03 99.898 L2100.28 102.926 L2092.48 103.839 L2095.46 111.103 L2089.3 106.234 L2086.27 113.479 L2085.36 105.68 L2078.1 108.663 L2082.97 102.502 L2075.72 99.4743 L2083.52 98.5608 L2080.54 91.2969 L2086.7 96.1656 Z" fill="#ffd27a"/>
<rect x="2116.6" y="92.8" width="8" height="6.8" fill="#4a6a8c" stroke="#6cbcf2" stroke-width="1.1"/>
<circle cx="2120.6" cy="105.8" r="4" fill="#6b7383" stroke="#dcdcdc" stroke-width="1.1"/>
<path d="M2128.4 89.4 H2132.2 V96.6 M2132.2 107 V112.2 H2128.4" fill="none" stroke="#ffffff" stroke-width="1.2"/>
<path d="M2129 98.6 L2135.6 105.2 M2135.6 98.6 L2129 105.2" fill="none" stroke="#f05a5a" stroke-width="2.2"/>
<path d="M2117 125.4 H2113.4 V145.6 H2117 M2124.2 125.4 H2127.8 V145.6 H2124.2" fill="none" stroke="#ffffff" stroke-width="1.2"/>
<rect x="2117.4" y="128.4" width="6.6" height="5" fill="#4a6a8c" stroke="#6cbcf2" stroke-width="1.1"/>
<circle cx="2120.6" cy="139.6" r="3.3" fill="#6b7383" stroke="#dcdcdc" stroke-width="1.1"/>
<g transform="translate(2136.4 138) rotate(136.023)"><path d="M2 -2.2 H3.4 V2.2 H2 A2.2 2.2 0 0 1 2 -2.2 Z" fill="#f05f5f"/><rect x="3.2" y="-2.2" width="8.44172" height="4.4" fill="#f9c866"/><polygon points="11.6417,-2.2 15.8417,0 11.6417,2.2" fill="#d6d6d6"/></g>
<path d="M2119 161.6 H2115.6 V181.6 H2119 M2126.2 161.6 H2129.6 V172" fill="none" stroke="#ffffff" stroke-width="1.2"/>
<rect x="2119.4" y="165" width="6.4" height="4.4" fill="#3f7a62" stroke="#5fd27a" stroke-width="1.1"/>
<circle cx="2122.6" cy="175.6" r="3.3" fill="#3f7a62" stroke="#5fd27a" stroke-width="1.1"/>
<path d="M2127.8 171.6 L2127.8 183.56 L2130.56 180.984 L2132.58 185.4 L2134.61 184.48 L2132.58 180.248 L2136.45 180.248 Z" fill="#ffffff" stroke="#3b4453" stroke-width="0.6"/>
<rect x="2180" y="107.2" width="42.2" height="9.6" fill="#fbd27a"/>
<line x1="2183.52" y1="107.2" x2="2183.52" y2="111" stroke="#b89548" stroke-width="1"/>
<line x1="2187.04" y1="107.2" x2="2187.04" y2="109.6" stroke="#b89548" stroke-width="1"/>
<line x1="2190.56" y1="107.2" x2="2190.56" y2="111" stroke="#b89548" stroke-width="1"/>
<line x1="2194.08" y1="107.2" x2="2194.08" y2="109.6" stroke="#b89548" stroke-width="1"/>
<line x1="2197.6" y1="107.2" x2="2197.6" y2="111" stroke="#b89548" stroke-width="1"/>
<line x1="2201.12" y1="107.2" x2="2201.12" y2="109.6" stroke="#b89548" stroke-width="1"/>
<line x1="2204.64" y1="107.2" x2="2204.64" y2="111" stroke="#b89548" stroke-width="1"/>
<line x1="2208.16" y1="107.2" x2="2208.16" y2="109.6" stroke="#b89548" stroke-width="1"/>
<line x1="2211.68" y1="107.2" x2="2211.68" y2="111" stroke="#b89548" stroke-width="1"/>
<line x1="2215.2" y1="107.2" x2="2215.2" y2="109.6" stroke="#b89548" stroke-width="1"/>
<line x1="2218.72" y1="107.2" x2="2218.72" y2="111" stroke="#b89548" stroke-width="1"/>
<path d="M2258.8 96 L2258.8 109.65 L2261.95 106.71 L2264.26 111.75 L2266.57 110.7 L2264.26 105.87 L2268.67 105.87 Z" fill="#ffffff" stroke="#3b4453" stroke-width="0.6"/>
<path d="M2271.4 88.6 L2262 96 L2266.4 96.8 L2262.6 102.4 L2272.4 94.2 L2267.8 93.4 Z" fill="#ffd27a"/>
<rect x="2269.2" y="99.2" width="13.8" height="13.8" fill="#f2f2f2"/>
<rect x="2271.4" y="102" width="1.8" height="1.8" fill="#2a8af0"/>
<line x1="2274.4" y1="102.8" x2="2281" y2="102.8" stroke="#2a8af0" stroke-width="1.1"/>
<rect x="2271.4" y="105.2" width="1.8" height="1.8" fill="#2a8af0"/>
<line x1="2274.4" y1="106" x2="2281" y2="106" stroke="#2a8af0" stroke-width="1.1"/>
<rect x="2271.4" y="108.4" width="1.8" height="1.8" fill="#2a8af0"/>
<line x1="2274.4" y1="109.2" x2="2281" y2="109.2" stroke="#2a8af0" stroke-width="1.1"/>
<rect x="2259.6" y="125.6" width="21" height="21.2" fill="none" stroke="#5fd27a" stroke-width="1.1" stroke-dasharray="2.4 1.4"/>
<rect x="2266" y="128.2" width="11.6" height="11.6" fill="#7fd8a0"/>
<rect x="2262" y="132.4" width="11.6" height="11.6" fill="#7fd8a0" stroke="#3b4453" stroke-width="0.8"/>
<path d="M2273.6 135.4 L2273.6 147.36 L2276.36 144.784 L2278.38 149.2 L2280.41 148.28 L2278.38 144.048 L2282.25 144.048 Z" fill="#ffffff" stroke="#3b4453" stroke-width="0.6"/>
<rect x="2262" y="161.2" width="17.2" height="23.6" fill="#d4d4d4"/>
<rect x="2264.6" y="164" width="12" height="4.6" fill="#5a5a5a"/>
<rect x="2264.8" y="171.4" width="2.8" height="2.6" fill="#5a5a5a"/>
<rect x="2269" y="171.4" width="2.8" height="2.6" fill="#5a5a5a"/>
<rect x="2273.2" y="171.4" width="2.8" height="2.6" fill="#5a5a5a"/>
<rect x="2264.8" y="175.5" width="2.8" height="2.6" fill="#5a5a5a"/>
<rect x="2269" y="175.5" width="2.8" height="2.6" fill="#5a5a5a"/>
<rect x="2273.2" y="175.5" width="2.8" height="2.6" fill="#5a5a5a"/>
<rect x="2264.8" y="179.6" width="2.8" height="2.6" fill="#5a5a5a"/>
<rect x="2269" y="179.6" width="2.8" height="2.6" fill="#5a5a5a"/>
<rect x="2273.2" y="179.6" width="2.8" height="2.6" fill="#5a5a5a"/>
<rect x="2315.2" y="93.2" width="32.8" height="37" fill="#deb078"/>
<path d="M2322.8 94.6 Q2322.8 91 2327 91 V89.4 Q2327 88 2328.4 88 H2334 Q2335.4 88 2335.4 89.4 V91 Q2339.8 91 2339.8 94.6 Z" fill="#ffffff"/>
<path d="M2326 103.2 L2344.2 103.2 L2353.2 112 L2353.2 136.2 L2326 136.2 Z" fill="#dcdcdc" stroke="#3b4453" stroke-width="0.8"/>
<path d="M2344.2 103.2 L2353.2 112 L2344.2 112 Z" fill="#f6f6f6"/>
<rect x="2379" y="89" width="18" height="21" fill="#d4d4d4"/>
<path d="M2382 93.4 H2394 M2382 99.4 H2390 M2382 105.4 H2390" fill="none" stroke="#8a8a8a" stroke-width="1"/>
<path d="M2389.8 96.8 L2399.6 109 M2402.6 98.6 L2393.4 109" fill="none" stroke="#ffffff" stroke-width="1.9"/>
<circle cx="2392.2" cy="110.6" r="2.2" fill="none" stroke="#ffffff" stroke-width="1.3"/>
<circle cx="2400.6" cy="110.6" r="2.2" fill="none" stroke="#ffffff" stroke-width="1.3"/>
<path d="M2382 125.2 L2391 125.2 L2394.2 128.4 L2394.2 145.2 L2382 145.2 Z" fill="#d4d4d4"/>
<path d="M2386 129.4 L2396.4 129.4 L2401.2 134.2 L2401.2 149 L2386 149 Z" fill="#dcdcdc" stroke="#3b4453" stroke-width="0.8"/>
<path d="M2396.4 129.4 L2401.2 134.2 L2396.4 134.2 Z" fill="#f6f6f6"/>
<path d="M2453.2 93.2 L2474 93.2 L2474 108 L2501.2 108 L2501.2 129 L2453.2 129 Z" fill="#dcdcdc"/>
<path d="M1693.6 1490.2 V1513 M1699.5 1490.2 V1513 M1705.4 1490.2 V1513 M1688 1496 H1711 M1688 1501.8 H1711 M1688 1507.6 H1711" fill="none" stroke="#e4e4e4" stroke-width="1.3"/>
<rect x="1726.9" y="1493.3" width="2.6" height="2.6" fill="#e4e4e4"/>
<rect x="1726.9" y="1500.3" width="2.6" height="2.6" fill="#e4e4e4"/>
<rect x="1726.9" y="1507.3" width="2.6" height="2.6" fill="#e4e4e4"/>
<rect x="1733.9" y="1493.3" width="2.6" height="2.6" fill="#e4e4e4"/>
<rect x="1733.9" y="1500.3" width="2.6" height="2.6" fill="#e4e4e4"/>
<rect x="1733.9" y="1507.3" width="2.6" height="2.6" fill="#e4e4e4"/>
<rect x="1740.9" y="1493.3" width="2.6" height="2.6" fill="#e4e4e4"/>
<rect x="1740.9" y="1500.3" width="2.6" height="2.6" fill="#e4e4e4"/>
<rect x="1740.9" y="1507.3" width="2.6" height="2.6" fill="#e4e4e4"/>
<path d="M1795.2 1493 V1504.2 M1789.6 1498.6 H1800.8" fill="none" stroke="#e4e4e4" stroke-width="1.3"/>
<rect x="1799.2" y="1505.4" width="14.8" height="5.6" fill="#e0e0e0" stroke="#e4e4e4" stroke-width="0.8"/>
<rect x="1800.4" y="1506.4" width="2" height="3.6" fill="#2a2f3a"/>
<path d="M1828.6 1490.2 V1513.2 H1852 M1828.6 1507 H1836 V1513.2" fill="none" stroke="#e4e4e4" stroke-width="1.3"/>
<circle cx="1873.2" cy="1502.6" r="9.4" fill="none" stroke="#e4e4e4" stroke-width="1.3"/>
<path d="M1884 1492 L1873.6 1502.6 H1887.8" fill="none" stroke="#e4e4e4" stroke-width="1.3"/>
<line x1="1936.4" y1="1490" x2="1936.4" y2="1512" stroke="#4fd070" stroke-width="1.4"/>
<line x1="1927.2" y1="1492" x2="1945" y2="1509.8" stroke="#e05a5a" stroke-width="1.4"/>
<rect x="1934.6" y="1499.6" width="3.6" height="3.6" fill="#3b4453" stroke="#ffffff" stroke-width="1"/>
<path d="M2004 1493.4 L1986.6 1510.6 H2009.6" fill="none" stroke="#ffffff" stroke-width="1.4"/>
<rect x="1993.2" y="1500" width="3.8" height="3.8" fill="#ffffff"/>
<rect x="2025" y="1493.4" width="20.6" height="19.8" fill="none" stroke="#ffffff" stroke-width="1.4"/>
<rect x="2022" y="1490.4" width="6.6" height="6.2" fill="#5f8fc6" stroke="#ffffff" stroke-width="1.2"/>
<path d="M2098.5 1490 L2102.2 1500.6 L2101 1501.8 L2101.3 1503.7 L2103.7 1505.2 L2109 1513.9 L2100.8 1510 L2099.8 1508.3 L2098.5 1507.9 L2097.2 1508.3 L2096.2 1510 L2088 1513.9 L2093.3 1505.2 L2095.7 1503.7 L2096 1501.8 L2094.8 1500.6 Z" fill="#ffffff"/>
<circle cx="2107.5" cy="1495.5" r="4" fill="none" stroke="#ffffff" stroke-width="1.4"/>
<path d="M2134.5 1490 L2138.2 1500.6 L2137 1501.8 L2137.3 1503.7 L2139.7 1505.2 L2145 1513.9 L2136.8 1510 L2135.8 1508.3 L2134.5 1507.9 L2133.2 1508.3 L2132.2 1510 L2124 1513.9 L2129.3 1505.2 L2131.7 1503.7 L2132 1501.8 L2130.8 1500.6 Z" fill="#dadada"/>
<path d="M2145.7 1490.2 L2139.7 1496 L2142.3 1496.5 L2140.2 1501.8 L2146.9 1496 L2143.8 1495.3 Z" fill="#dadada"/>
<path d="M2171.5 1490 L2175.2 1500.6 L2174 1501.8 L2174.3 1503.7 L2176.7 1505.2 L2182 1513.9 L2173.8 1510 L2172.8 1508.3 L2171.5 1507.9 L2170.2 1508.3 L2169.2 1510 L2161 1513.9 L2166.3 1505.2 L2168.7 1503.7 L2169 1501.8 L2167.8 1500.6 Z" fill="#dadada"/>
<rect x="-2.7" y="-12.2" width="5.4" height="6" fill="#dcdcdc" transform="translate(2264 1501.8) rotate(0)"/>
<rect x="-2.7" y="-12.2" width="5.4" height="6" fill="#dcdcdc" transform="translate(2264 1501.8) rotate(45)"/>
<rect x="-2.7" y="-12.2" width="5.4" height="6" fill="#dcdcdc" transform="translate(2264 1501.8) rotate(90)"/>
<rect x="-2.7" y="-12.2" width="5.4" height="6" fill="#dcdcdc" transform="translate(2264 1501.8) rotate(135)"/>
<rect x="-2.7" y="-12.2" width="5.4" height="6" fill="#dcdcdc" transform="translate(2264 1501.8) rotate(180)"/>
<rect x="-2.7" y="-12.2" width="5.4" height="6" fill="#dcdcdc" transform="translate(2264 1501.8) rotate(225)"/>
<rect x="-2.7" y="-12.2" width="5.4" height="6" fill="#dcdcdc" transform="translate(2264 1501.8) rotate(270)"/>
<rect x="-2.7" y="-12.2" width="5.4" height="6" fill="#dcdcdc" transform="translate(2264 1501.8) rotate(315)"/>
<circle cx="2264" cy="1501.8" r="6.6" fill="none" stroke="#dcdcdc" stroke-width="4.6"/>
<path d="M2325.6 1490.2 V1513.4 M2314 1501.8 H2337.2" fill="none" stroke="#e4e4e4" stroke-width="3.2"/>
<rect x="2356.4" y="1490.8" width="9.4" height="8.8" fill="none" stroke="#e4e4e4" stroke-width="1.2"/>
<circle cx="2374.4" cy="1500.8" r="5" fill="none" stroke="#e4e4e4" stroke-width="1.2"/>
<path d="M2360.2 1513.2 L2371.2 1513.2 L2365.7 1504.8 Z" fill="none" stroke="#e4e4e4" stroke-width="1.2"/>
<path d="M2393.8 1484 L2414 1484 L2424.2 1494 L2424.2 1515.4 L2393.8 1515.4 Z" fill="#3a6fb0"/>
<path d="M2414 1484 L2424.2 1494 L2414 1494 Z" fill="#6aa6e8"/>
<rect x="2393.8" y="1504.6" width="16" height="10.8" fill="#f0b428"/>
<path d="M2401 1484 V1504 M2393.8 1491.6 H2418" fill="none" stroke="#a8d0f8" stroke-width="1.6"/>
<circle cx="2401" cy="1491.6" r="2.6" fill="#3a6fb0" stroke="#d8ecff" stroke-width="1.4"/>
<path d="M2408 1510.4 L2415.4 1516.8 L2429 1504.6" fill="none" stroke="#4caf50" stroke-width="4.2"/>
<path d="M2445 1496.6 A10.4 10.4 0 1 1 2459 1511" fill="none" stroke="#e4e4e4" stroke-width="1.4"/>
<path d="M2441.6 1495.2 L2447.6 1493.4 L2446.4 1499.4 Z" fill="#e4e4e4"/>
<path d="M2453 1492.8 V1500 H2458.6" fill="none" stroke="#e4e4e4" stroke-width="1.3"/>
<path d="M2440.4 1500.4 L2448 1500.4 L2451.6 1504 L2451.6 1513.4 L2440.4 1513.4 Z" fill="#3a6fb0" stroke="#e8f0f8" stroke-width="1"/>
<rect x="2440.9" y="1509" width="10.2" height="4" fill="#f0b428"/>
<circle cx="2458.4" cy="1508.4" r="5.3" fill="#5aabea"/>
<rect x="2457.7" y="1507.4" width="1.5" height="3.8" fill="#ffffff"/>
<rect x="2457.7" y="1505" width="1.5" height="1.5" fill="#ffffff"/>
<rect x="2484.8" y="1493.4" width="22.8" height="15.8" fill="none" stroke="#e4e4e4" stroke-width="1.4"/>
<path d="M2498 1500 L2503.4 1496.2 M2494.6 1502.6 L2489.2 1506.4" fill="none" stroke="#e4e4e4" stroke-width="1.3"/>
<path d="M2504.6 1495.2 L2500 1495.6 L2503.6 1499.4 Z" fill="#e4e4e4"/>
<path d="M2488 1507.4 L2492.6 1507 L2489 1503.2 Z" fill="#e4e4e4"/>
<rect x="2520" y="1491.3" width="24.4" height="3" fill="#e4e4e4"/>
<rect x="2520" y="1500.1" width="24.4" height="3" fill="#e4e4e4"/>
<rect x="2520" y="1508.9" width="24.4" height="3" fill="#e4e4e4"/>
<rect x="0" y="0" width="2556" height="1" fill="#18a3e6"/><rect x="0" y="0" width="1" height="1528" fill="#18a3e6"/><rect x="2554.3" y="0" width="1.7" height="1528" fill="#18a3e6"/><rect x="0" y="1526.4" width="2556" height="1.6" fill="#18a3e6"/>
</svg>
</body></html>
